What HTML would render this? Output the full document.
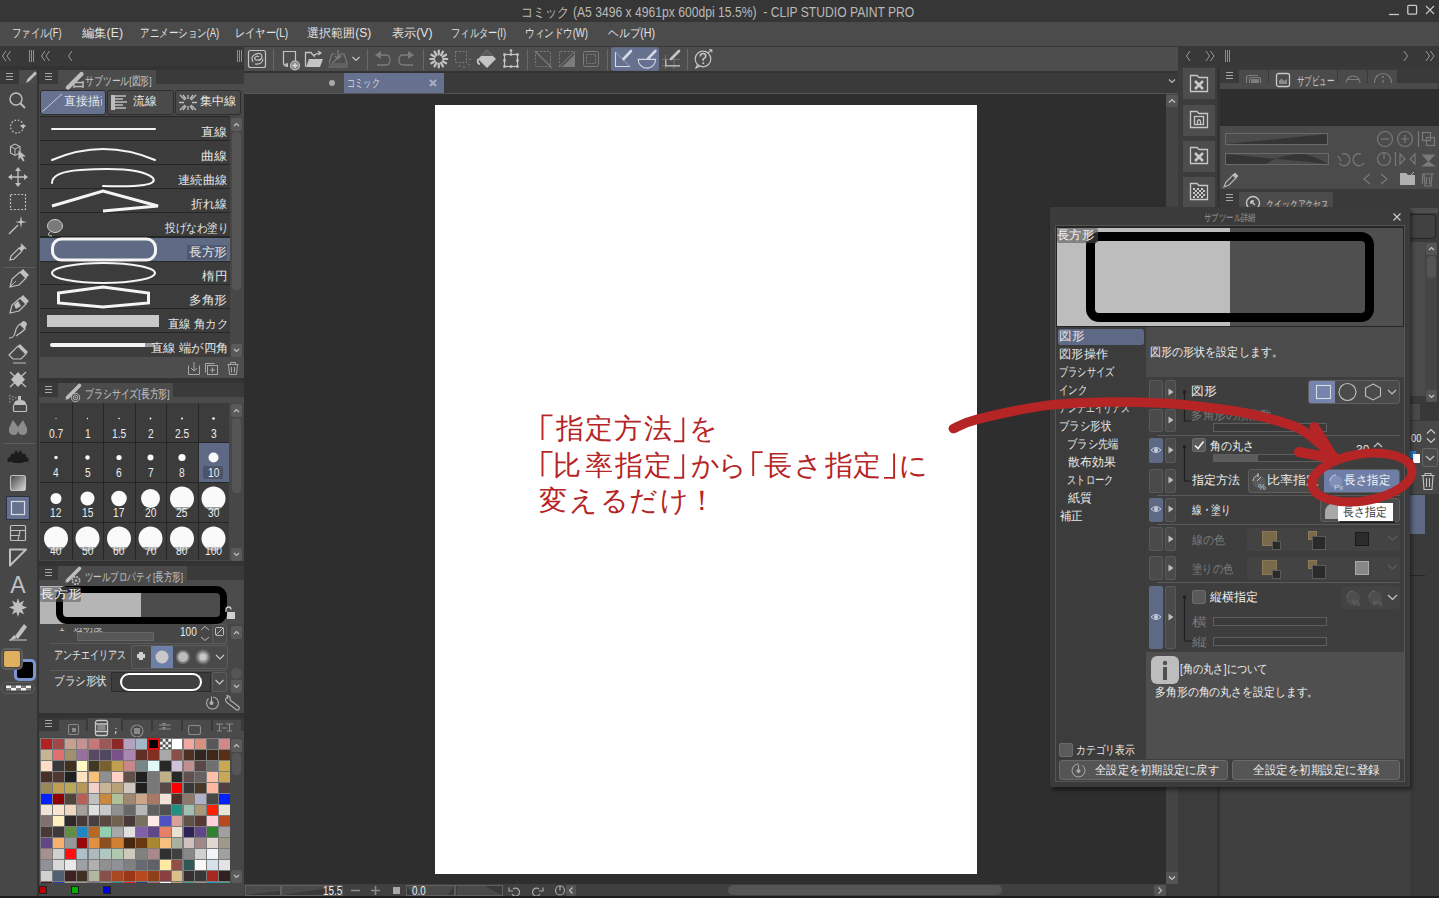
<!DOCTYPE html>
<html><head><meta charset="utf-8">
<style>
*{box-sizing:border-box;margin:0;padding:0}
html,body{width:1439px;height:898px;overflow:hidden;background:#2e2e2e;font-family:"Liberation Sans",sans-serif;color:#e0e0e0}
.a{position:absolute}
.t{position:absolute;white-space:nowrap;line-height:1}
</style></head><body>
<div class="a" style="left:0px;top:0px;width:1439px;height:22px;background:#363636;"></div>
<div class="t" style="left:521.27px;top:5.00px;font-size:14px;color:#b9b9b9;transform:scaleX(0.8670);transform-origin:0 0;--nw:453.64;--sx:0.8670;">コミック (A5 3496 x 4961px 600dpi 15.5%)&nbsp; - CLIP STUDIO PAINT PRO</div>
<svg class="a" style="left:1385px;top:0px;" width="52" height="20" viewBox="0 0 52 20" fill="none"><path d="M4 14.5H14" stroke="#c8c8c8" stroke-width="1.3"/><rect x="22.8" y="5.4" width="8.8" height="8.8" rx="1.2" stroke="#c8c8c8" stroke-width="1.3"/><path d="M41 6L49 14M49 6L41 14" stroke="#c8c8c8" stroke-width="1.1"/></svg>
<div class="a" style="left:0px;top:22px;width:1439px;height:24px;background:#4b4b4b;"></div>
<div class="t" style="left:12.22px;top:27.00px;font-size:12px;color:#e2e2e2;transform:scaleX(0.7823);transform-origin:0 0;--nw:63.33;--sx:0.7823;">ファイル(F)</div>
<div class="t" style="left:82.00px;top:27.00px;font-size:12px;color:#e2e2e2;transform:scaleX(1.0256);transform-origin:0 0;--nw:40.00;--sx:1.0256;">編集(E)</div>
<div class="t" style="left:140.21px;top:27.00px;font-size:12px;color:#e2e2e2;transform:scaleX(0.7918);transform-origin:0 0;--nw:100.00;--sx:0.7918;">アニメーション(A)</div>
<div class="t" style="left:235.30px;top:27.00px;font-size:12px;color:#e2e2e2;transform:scaleX(0.8500);transform-origin:0 0;--nw:62.67;--sx:0.8500;">レイヤー(L)</div>
<div class="t" style="left:307.20px;top:27.00px;font-size:12px;color:#e2e2e2;--nw:64.00;--sx:0.9968;">選択範囲(S)</div>
<div class="t" style="left:391.59px;top:27.00px;font-size:12px;color:#e2e2e2;transform:scaleX(1.0105);transform-origin:0 0;--nw:40.00;--sx:1.0105;">表示(V)</div>
<div class="t" style="left:450.93px;top:27.00px;font-size:12px;color:#e2e2e2;transform:scaleX(0.7714);transform-origin:0 0;--nw:71.33;--sx:0.7714;">フィルター(I)</div>
<div class="t" style="left:525.21px;top:27.00px;font-size:12px;color:#e2e2e2;transform:scaleX(0.7949);transform-origin:0 0;--nw:79.33;--sx:0.7949;">ウィンドウ(W)</div>
<div class="t" style="left:607.70px;top:27.00px;font-size:12px;color:#e2e2e2;transform:scaleX(0.8961);transform-origin:0 0;--nw:52.67;--sx:0.8961;">ヘルプ(H)</div>
<div class="a" style="left:0px;top:46px;width:244px;height:24px;background:#383838;"></div>
<div class="a" style="left:0px;top:66px;width:244px;height:4px;background:#333333;"></div>
<svg class="a" style="left:0px;top:46px;" width="244" height="20" viewBox="0 0 244 20" fill="none"><path d="M6 5L2.5 10L6 15M10.5 5L7 10L10.5 15" stroke="#9a9a9a" stroke-width="1"/><path d="M29.5 4V16M31.5 4V16M33.5 4V16" stroke="#9a9a9a" stroke-width="0.9"/><path d="M45 5L41.5 10L45 15M49.5 5L46 10L49.5 15" stroke="#9a9a9a" stroke-width="1"/><path d="M72 5L68.5 10L72 15" stroke="#9a9a9a" stroke-width="1"/><path d="M237.5 4V16M239.5 4V16M241.5 4V16" stroke="#9a9a9a" stroke-width="0.9"/></svg>
<div class="a" style="left:244px;top:46px;width:934px;height:25px;background:#4d4d4d;"></div>
<div class="a" style="left:244px;top:46px;width:934px;height:1px;background:#383838;"></div>
<div class="a" style="left:244px;top:71px;width:934px;height:2px;background:#333333;"></div>
<div class="a" style="left:1178px;top:46px;width:261px;height:21px;background:#383838;"></div>
<div class="a" style="left:0px;top:70px;width:37px;height:828px;background:#474747;"></div>
<div class="a" style="left:0px;top:70px;width:19px;height:14px;background:#393939;"></div>
<svg class="a" style="left:4px;top:72px;" width="12" height="10" viewBox="0 0 12 10" fill="none"><path d="M2 1.5H9M2 4.5H9M2 7.5H9" stroke="#a8a8a8" stroke-width="1"/></svg>
<div class="a" style="left:37px;top:70px;width:2px;height:828px;background:#333333;"></div>
<div class="a" style="left:39px;top:70px;width:205px;height:828px;background:#474747;"></div>
<div class="a" style="left:39px;top:70px;width:205px;height:14px;background:#3a3a3a;"></div>
<div class="a" style="left:39px;top:70px;width:19px;height:14px;background:#393939;"></div>
<svg class="a" style="left:43px;top:72px;" width="12" height="10" viewBox="0 0 12 10" fill="none"><path d="M2 1.5H9M2 4.5H9M2 7.5H9" stroke="#a8a8a8" stroke-width="1"/></svg>
<div class="a" style="left:58px;top:70px;width:98px;height:14px;background:#4b4b4b;"></div>
<div class="a" style="left:39px;top:84px;width:205px;height:6px;background:#4b4b4b;"></div>
<div class="t" style="left:85.26px;top:76.00px;font-size:11.5px;color:#c8c8c8;transform:scaleX(0.7371);transform-origin:0 0;--nw:90.39;--sx:0.7371;">サブツール[図形]</div>
<svg class="a" style="left:60px;top:68px;" width="30" height="22" viewBox="0 0 30 22" fill="none"><path d="M8 19.5L21.5 6" stroke="#bdbdbd" stroke-width="4.2" stroke-linecap="round"/><path d="M5.5 21L8 17.5L9.5 19Z" fill="#bdbdbd"/><path d="M14.5 14.5H23M14.5 18.5H23" stroke="#bdbdbd" stroke-width="1.6"/><path d="M14 13V20M23 13V20" stroke="#bdbdbd" stroke-width="1.4"/></svg>
<div class="a" style="left:40px;top:90px;width:66px;height:25px;background:#66728f;border:1px solid #2d2d2d;border-radius:3px"></div>
<div class="a" style="left:107px;top:90px;width:67px;height:25px;background:#4a4a4a;border:1px solid #2d2d2d;border-radius:3px"></div>
<div class="a" style="left:175px;top:90px;width:66px;height:25px;background:#4a4a4a;border:1px solid #2d2d2d;border-radius:3px"></div>
<svg class="a" style="left:40px;top:90px;" width="26" height="25" viewBox="0 0 26 25" fill="none"><path d="M2.5 21.5L22 4" stroke="#d0d0d0" stroke-width="1"/></svg>
<svg class="a" style="left:110px;top:94px;" width="20" height="17" viewBox="0 0 20 17" fill="none"><path d="M2 2H16M2 5H13M2 8H17M2 11H13M2 14H16" stroke="#bdbdbd" stroke-width="1.3"/><rect x="1" y="1" width="4" height="15" fill="#bdbdbd"/></svg>
<svg class="a" style="left:178px;top:94px;" width="20" height="17" viewBox="0 0 20 17" fill="none"><g stroke="#bdbdbd" stroke-width="1.3"><path d="M2 1L7 6M18 1L13 6M2 16L7 11M18 16L13 11M10 1V5M10 12V16M1 8.5H6M14 8.5H19M5 1L8 5M15 1L12 5M5 16L8 12M15 16L12 12"/></g></svg>
<div class="t" style="left:64.00px;top:95.00px;font-size:12px;color:#e8e8e8;--nw:48.00;--sx:1.0000;clip-path:inset(0 10px 0 0)">直接描画</div>
<div class="t" style="left:133.00px;top:95.00px;font-size:12px;color:#e8e8e8;transform:scaleX(0.9826);transform-origin:0 0;--nw:24.00;--sx:0.9826;">流線</div>
<div class="t" style="left:200.40px;top:95.00px;font-size:12px;color:#e8e8e8;transform:scaleX(1.0171);transform-origin:0 0;--nw:36.00;--sx:1.0171;">集中線</div>
<div class="a" style="left:40px;top:116px;width:190px;height:241px;background:#3c3c3c;"></div>
<div class="a" style="left:40px;top:116px;width:190px;height:1px;background:#262626;"></div>
<div class="a" style="left:40px;top:140px;width:190px;height:1px;background:#262626;"></div>
<div class="a" style="left:40px;top:164px;width:190px;height:1px;background:#262626;"></div>
<div class="a" style="left:40px;top:188px;width:190px;height:1px;background:#262626;"></div>
<div class="a" style="left:40px;top:212px;width:190px;height:1px;background:#262626;"></div>
<div class="a" style="left:40px;top:236px;width:190px;height:1px;background:#262626;"></div>
<div class="a" style="left:40px;top:260px;width:190px;height:1px;background:#262626;"></div>
<div class="a" style="left:40px;top:284px;width:190px;height:1px;background:#262626;"></div>
<div class="a" style="left:40px;top:308px;width:190px;height:1px;background:#262626;"></div>
<div class="a" style="left:40px;top:332px;width:190px;height:1px;background:#262626;"></div>
<div class="a" style="left:40px;top:237px;width:190px;height:24px;background:#5f6a84;"></div>
<div class="a" style="left:40px;top:237px;width:190px;height:1px;background:#262626;"></div>
<div class="a" style="left:40px;top:261px;width:190px;height:1px;background:#262626;"></div>
<svg class="a" style="left:40px;top:116px;" width="190" height="241" viewBox="0 0 190 241" fill="none"><g stroke="#f4f4f4" fill="none" stroke-linecap="round"><path d="M12 13H115" stroke-width="2"/><path d="M12 44Q63 22 115 44" stroke-width="2"/><path d="M12 67Q12 56 40 54Q100 50 113 62Q120 72 63 70" stroke-width="2"/><path d="M12 90L63 75L118 90L63 95" stroke-width="3" stroke-linecap="butt"/><rect x="12.5" y="123" width="103" height="21" rx="9" stroke-width="3"/><ellipse cx="63.5" cy="157" rx="51.5" ry="10" stroke-width="2"/><path d="M18.5 177L63 171L108.5 177V187L63 191L18.5 187Z" stroke-width="3" stroke-linejoin="miter"/><path d="M12 229H105" stroke-width="4"/></g><rect x="7" y="199" width="112" height="12" fill="#c8c8c8"/><rect x="105" y="227" width="10" height="4" fill="#9a9a9a"/><ellipse cx="15" cy="110" rx="7.5" ry="6.5" fill="#7a7a7a" stroke="#cfcfcf" stroke-width="1"/><path d="M10 116Q6 120 12 120" stroke="#cfcfcf" stroke-width="1"/></svg>
<div class="a" style="left:187px;top:245px;width:40px;height:15px;background:#4e586e;"></div>
<div class="t" style="left:200.91px;top:126.00px;font-size:12px;color:#e6e6e6;transform:scaleX(1.0909);transform-origin:0 0;--nw:24.00;--sx:1.0909;">直線</div>
<div class="t" style="left:200.91px;top:150.00px;font-size:12px;color:#e6e6e6;transform:scaleX(1.0909);transform-origin:0 0;--nw:24.00;--sx:1.0909;">曲線</div>
<div class="t" style="left:177.98px;top:174.00px;font-size:12px;color:#e6e6e6;transform:scaleX(1.0217);transform-origin:0 0;--nw:48.00;--sx:1.0217;">連続曲線</div>
<div class="t" style="left:191.00px;top:198.00px;font-size:12px;color:#e6e6e6;--nw:36.00;--sx:1.0000;">折れ線</div>
<div class="t" style="left:165.00px;top:222.00px;font-size:12px;color:#e6e6e6;transform:scaleX(0.8841);transform-origin:0 0;--nw:72.00;--sx:0.8841;">投げなわ塗り</div>
<div class="t" style="left:188.94px;top:246.00px;font-size:12px;color:#e6e6e6;transform:scaleX(1.0588);transform-origin:0 0;--nw:36.00;--sx:1.0588;">長方形</div>
<div class="t" style="left:202.00px;top:270.00px;font-size:12px;color:#e6e6e6;transform:scaleX(1.0435);transform-origin:0 0;--nw:24.00;--sx:1.0435;">楕円</div>
<div class="t" style="left:188.94px;top:294.00px;font-size:12px;color:#e6e6e6;transform:scaleX(1.0588);transform-origin:0 0;--nw:36.00;--sx:1.0588;">多角形</div>
<div class="t" style="left:168.05px;top:318.00px;font-size:12px;color:#e6e6e6;transform:scaleX(0.9500);transform-origin:0 0;--nw:63.34;--sx:0.9500;">直線 角カク</div>
<div class="t" style="left:150.97px;top:342.00px;font-size:12px;color:#e6e6e6;transform:scaleX(1.0278);transform-origin:0 0;--nw:75.34;--sx:1.0278;">直線 端が四角</div>
<div class="a" style="left:230px;top:116px;width:13px;height:241px;background:#474747;"></div>
<div class="a" style="left:231px;top:118px;width:11px;height:13px;background:#5a5a5a;border-radius:2px"></div>
<svg class="a" style="left:231px;top:118px;" width="11" height="13" viewBox="0 0 11 13" fill="none"><path d="M3 8L5.5 5.5L8 8" stroke="#c0c0c0" stroke-width="1.1"/></svg>
<div class="a" style="left:232px;top:132px;width:9px;height:158px;background:#555555;border-radius:4px"></div>
<div class="a" style="left:231px;top:344px;width:11px;height:13px;background:#5a5a5a;border-radius:2px"></div>
<svg class="a" style="left:231px;top:344px;" width="11" height="13" viewBox="0 0 11 13" fill="none"><path d="M3 5L5.5 7.5L8 5" stroke="#c0c0c0" stroke-width="1.1"/></svg>
<div class="a" style="left:39px;top:357px;width:205px;height:21px;background:#4d4d4d;"></div>
<svg class="a" style="left:186px;top:360px;" width="56" height="16" viewBox="0 0 56 16" fill="none"><g stroke="#a8a8a8" stroke-width="1" fill="none"><path d="M2.5 5.5V14.5H13.5V5.5M8 2V11M5 8L8 11L11 8"/><rect x="21.5" y="5.5" width="10" height="9"/><path d="M19.5 12.5V3.5H28.5"/><path d="M26.5 7.5V12.5M24 10H29"/><path d="M41.5 4.5H52.5M44.5 4.5V2.5H49.5V4.5M42.5 4.5L43.5 14.5H50.5L51.5 4.5M45.5 7V12.5M48.5 7V12.5"/></g></svg>
<div class="a" style="left:39px;top:378px;width:205px;height:5px;background:#333333;"></div>
<div class="a" style="left:39px;top:383px;width:205px;height:14px;background:#3a3a3a;"></div>
<div class="a" style="left:39px;top:383px;width:19px;height:14px;background:#393939;"></div>
<svg class="a" style="left:43px;top:385px;" width="12" height="10" viewBox="0 0 12 10" fill="none"><path d="M2 1.5H9M2 4.5H9M2 7.5H9" stroke="#a8a8a8" stroke-width="1"/></svg>
<div class="a" style="left:58px;top:383px;width:115px;height:14px;background:#4b4b4b;"></div>
<div class="a" style="left:39px;top:397px;width:205px;height:6px;background:#4b4b4b;"></div>
<div class="t" style="left:85.26px;top:389.00px;font-size:11.5px;color:#c8c8c8;transform:scaleX(0.7398);transform-origin:0 0;--nw:114.39;--sx:0.7398;">ブラシサイズ[長方形]</div>
<svg class="a" style="left:60px;top:381px;" width="30" height="22" viewBox="0 0 30 22" fill="none"><path d="M7.5 16.5L19.5 4.5" stroke="#bdbdbd" stroke-width="3.6" stroke-linecap="round"/><path d="M5 19L7.5 15L9 17Z" fill="#bdbdbd"/><circle cx="15.5" cy="16.5" r="4.2" fill="#4b4b4b" stroke="#bdbdbd" stroke-width="0.9"/><circle cx="15.5" cy="16.5" r="2.3" stroke="#bdbdbd" stroke-width="0.9"/><rect x="14.8" y="15.8" width="1.4" height="1.4" fill="#bdbdbd"/></svg>
<div class="a" style="left:40px;top:403px;width:189px;height:157px;background:#262626;"></div>
<div class="a" style="left:40px;top:403px;width:32px;height:39px;background:#3c3c3c;"></div>
<div class="a" style="left:73px;top:403px;width:30px;height:39px;background:#3c3c3c;"></div>
<div class="a" style="left:104px;top:403px;width:31px;height:39px;background:#3c3c3c;"></div>
<div class="a" style="left:136px;top:403px;width:30px;height:39px;background:#3c3c3c;"></div>
<div class="a" style="left:167px;top:403px;width:31px;height:39px;background:#3c3c3c;"></div>
<div class="a" style="left:199px;top:403px;width:30px;height:39px;background:#3c3c3c;"></div>
<div class="a" style="left:40px;top:443px;width:32px;height:39px;background:#3c3c3c;"></div>
<div class="a" style="left:73px;top:443px;width:30px;height:39px;background:#3c3c3c;"></div>
<div class="a" style="left:104px;top:443px;width:31px;height:39px;background:#3c3c3c;"></div>
<div class="a" style="left:136px;top:443px;width:30px;height:39px;background:#3c3c3c;"></div>
<div class="a" style="left:167px;top:443px;width:31px;height:39px;background:#3c3c3c;"></div>
<div class="a" style="left:199px;top:443px;width:30px;height:39px;background:#5e6a85;"></div>
<div class="a" style="left:40px;top:483px;width:32px;height:39px;background:#3c3c3c;"></div>
<div class="a" style="left:73px;top:483px;width:30px;height:39px;background:#3c3c3c;"></div>
<div class="a" style="left:104px;top:483px;width:31px;height:39px;background:#3c3c3c;"></div>
<div class="a" style="left:136px;top:483px;width:30px;height:39px;background:#3c3c3c;"></div>
<div class="a" style="left:167px;top:483px;width:31px;height:39px;background:#3c3c3c;"></div>
<div class="a" style="left:199px;top:483px;width:30px;height:39px;background:#3c3c3c;"></div>
<div class="a" style="left:40px;top:523px;width:32px;height:37px;background:#3c3c3c;"></div>
<div class="a" style="left:73px;top:523px;width:30px;height:37px;background:#3c3c3c;"></div>
<div class="a" style="left:104px;top:523px;width:31px;height:37px;background:#3c3c3c;"></div>
<div class="a" style="left:136px;top:523px;width:30px;height:37px;background:#3c3c3c;"></div>
<div class="a" style="left:167px;top:523px;width:31px;height:37px;background:#3c3c3c;"></div>
<div class="a" style="left:199px;top:523px;width:30px;height:37px;background:#3c3c3c;"></div>
<svg class="a" style="left:0;top:0" width="244" height="600" viewBox="0 0 244 600"><circle cx="56.0" cy="418.5" r="0.6" fill="#fafafa"/><circle cx="87.5" cy="418.5" r="0.7" fill="#fafafa"/><circle cx="119.0" cy="418.5" r="0.8" fill="#fafafa"/><circle cx="150.5" cy="418.5" r="0.9" fill="#fafafa"/><circle cx="182.0" cy="418.5" r="1.0" fill="#fafafa"/><circle cx="213.5" cy="418.5" r="1.3" fill="#fafafa"/><circle cx="56.0" cy="457.5" r="1.7" fill="#fafafa"/><circle cx="87.5" cy="457.5" r="2.2" fill="#fafafa"/><circle cx="119.0" cy="457.5" r="2.6" fill="#fafafa"/><circle cx="150.5" cy="457.5" r="3" fill="#fafafa"/><circle cx="182.0" cy="457.5" r="3.6" fill="#fafafa"/><circle cx="213.5" cy="457.5" r="5" fill="#fafafa"/><circle cx="56.0" cy="498.5" r="5.5" fill="#fafafa"/><circle cx="87.5" cy="498.5" r="7" fill="#fafafa"/><circle cx="119.0" cy="498.5" r="7.8" fill="#fafafa"/><circle cx="150.5" cy="498.5" r="9.5" fill="#fafafa"/><clipPath id="cp182498"><rect x="0" y="507.0" width="244" height="30"/></clipPath><circle cx="182.0" cy="498.5" r="12" fill="#fafafa"/><circle cx="182.0" cy="498.5" r="12" fill="#9c9c9c" clip-path="url(#cp182498)"/><clipPath id="cp213498"><rect x="0" y="507.0" width="244" height="30"/></clipPath><circle cx="213.5" cy="498.5" r="12" fill="#fafafa"/><circle cx="213.5" cy="498.5" r="12" fill="#9c9c9c" clip-path="url(#cp213498)"/><clipPath id="cp56538"><rect x="0" y="547.0" width="244" height="30"/></clipPath><circle cx="56.0" cy="538.5" r="12" fill="#fafafa"/><circle cx="56.0" cy="538.5" r="12" fill="#9c9c9c" clip-path="url(#cp56538)"/><clipPath id="cp87538"><rect x="0" y="547.0" width="244" height="30"/></clipPath><circle cx="87.5" cy="538.5" r="12" fill="#fafafa"/><circle cx="87.5" cy="538.5" r="12" fill="#9c9c9c" clip-path="url(#cp87538)"/><clipPath id="cp119538"><rect x="0" y="547.0" width="244" height="30"/></clipPath><circle cx="119.0" cy="538.5" r="12" fill="#fafafa"/><circle cx="119.0" cy="538.5" r="12" fill="#9c9c9c" clip-path="url(#cp119538)"/><clipPath id="cp150538"><rect x="0" y="547.0" width="244" height="30"/></clipPath><circle cx="150.5" cy="538.5" r="12" fill="#fafafa"/><circle cx="150.5" cy="538.5" r="12" fill="#9c9c9c" clip-path="url(#cp150538)"/><clipPath id="cp182538"><rect x="0" y="547.0" width="244" height="30"/></clipPath><circle cx="182.0" cy="538.5" r="12" fill="#fafafa"/><circle cx="182.0" cy="538.5" r="12" fill="#9c9c9c" clip-path="url(#cp182538)"/><clipPath id="cp213538"><rect x="0" y="547.0" width="244" height="30"/></clipPath><circle cx="213.5" cy="538.5" r="12" fill="#fafafa"/><circle cx="213.5" cy="538.5" r="12" fill="#9c9c9c" clip-path="url(#cp213538)"/></svg>
<div class="a" style="left:203px;top:466px;width:20px;height:13px;background:#4b5468;border-radius:2px"></div>
<div class="t" style="left:49.20px;top:428.00px;font-size:12px;color:#ececec;transform:scaleX(0.8500);transform-origin:0 0;--nw:16.69;--sx:0.8500;">0.7</div>
<div class="t" style="left:84.53px;top:428.00px;font-size:12px;color:#ececec;transform:scaleX(0.8500);transform-origin:0 0;--nw:6.69;--sx:0.8500;">1</div>
<div class="t" style="left:111.78px;top:428.00px;font-size:12px;color:#ececec;transform:scaleX(0.8500);transform-origin:0 0;--nw:16.69;--sx:0.8500;">1.5</div>
<div class="t" style="left:147.53px;top:428.00px;font-size:12px;color:#ececec;transform:scaleX(0.8500);transform-origin:0 0;--nw:6.69;--sx:0.8500;">2</div>
<div class="t" style="left:174.78px;top:428.00px;font-size:12px;color:#ececec;transform:scaleX(0.8500);transform-origin:0 0;--nw:16.69;--sx:0.8500;">2.5</div>
<div class="t" style="left:210.53px;top:428.00px;font-size:12px;color:#ececec;transform:scaleX(0.8500);transform-origin:0 0;--nw:6.69;--sx:0.8500;">3</div>
<div class="t" style="left:53.02px;top:467.00px;font-size:12px;color:#ececec;transform:scaleX(0.8500);transform-origin:0 0;--nw:6.69;--sx:0.8500;">4</div>
<div class="t" style="left:84.53px;top:467.00px;font-size:12px;color:#ececec;transform:scaleX(0.8500);transform-origin:0 0;--nw:6.69;--sx:0.8500;">5</div>
<div class="t" style="left:116.03px;top:467.00px;font-size:12px;color:#ececec;transform:scaleX(0.8500);transform-origin:0 0;--nw:6.69;--sx:0.8500;">6</div>
<div class="t" style="left:147.53px;top:467.00px;font-size:12px;color:#ececec;transform:scaleX(0.8500);transform-origin:0 0;--nw:6.69;--sx:0.8500;">7</div>
<div class="t" style="left:179.45px;top:467.00px;font-size:12px;color:#ececec;transform:scaleX(0.8500);transform-origin:0 0;--nw:6.69;--sx:0.8500;">8</div>
<div class="t" style="left:207.55px;top:467.00px;font-size:12px;color:#ececec;transform:scaleX(0.8500);transform-origin:0 0;--nw:13.36;--sx:0.8500;">10</div>
<div class="t" style="left:50.05px;top:507.00px;font-size:12px;color:#ececec;transform:scaleX(0.8500);transform-origin:0 0;--nw:13.36;--sx:0.8500;">12</div>
<div class="t" style="left:81.55px;top:507.00px;font-size:12px;color:#ececec;transform:scaleX(0.8500);transform-origin:0 0;--nw:13.36;--sx:0.8500;">15</div>
<div class="t" style="left:113.05px;top:507.00px;font-size:12px;color:#ececec;transform:scaleX(0.8500);transform-origin:0 0;--nw:13.36;--sx:0.8500;">17</div>
<div class="t" style="left:144.55px;top:507.00px;font-size:12px;color:#ececec;transform:scaleX(0.8500);transform-origin:0 0;--nw:13.36;--sx:0.8500;">20</div>
<div class="t" style="left:176.05px;top:507.00px;font-size:12px;color:#ececec;transform:scaleX(0.8500);transform-origin:0 0;--nw:13.36;--sx:0.8500;">25</div>
<div class="t" style="left:207.55px;top:507.00px;font-size:12px;color:#ececec;transform:scaleX(0.8500);transform-origin:0 0;--nw:13.36;--sx:0.8500;">30</div>
<div class="t" style="left:50.48px;top:545.00px;font-size:12px;color:#ececec;transform:scaleX(0.8500);transform-origin:0 0;--nw:13.36;--sx:0.8500;">40</div>
<div class="t" style="left:81.55px;top:545.00px;font-size:12px;color:#ececec;transform:scaleX(0.8500);transform-origin:0 0;--nw:13.36;--sx:0.8500;">50</div>
<div class="t" style="left:113.05px;top:545.00px;font-size:12px;color:#ececec;transform:scaleX(0.8500);transform-origin:0 0;--nw:13.36;--sx:0.8500;">60</div>
<div class="t" style="left:144.55px;top:545.00px;font-size:12px;color:#ececec;transform:scaleX(0.8500);transform-origin:0 0;--nw:13.36;--sx:0.8500;">70</div>
<div class="t" style="left:176.47px;top:545.00px;font-size:12px;color:#ececec;transform:scaleX(0.8500);transform-origin:0 0;--nw:13.36;--sx:0.8500;">80</div>
<div class="t" style="left:204.57px;top:545.00px;font-size:12px;color:#ececec;transform:scaleX(0.8500);transform-origin:0 0;--nw:20.03;--sx:0.8500;">100</div>
<div class="a" style="left:230px;top:403px;width:13px;height:157px;background:#474747;"></div>
<div class="a" style="left:231px;top:404px;width:11px;height:13px;background:#5a5a5a;border-radius:2px"></div>
<svg class="a" style="left:231px;top:404px;" width="11" height="13" viewBox="0 0 11 13" fill="none"><path d="M3 8L5.5 5.5L8 8" stroke="#c0c0c0" stroke-width="1.1"/></svg>
<div class="a" style="left:232px;top:418px;width:9px;height:75px;background:#555555;border-radius:4px"></div>
<div class="a" style="left:231px;top:548px;width:11px;height:13px;background:#5a5a5a;border-radius:2px"></div>
<svg class="a" style="left:231px;top:548px;" width="11" height="13" viewBox="0 0 11 13" fill="none"><path d="M3 5L5.5 7.5L8 5" stroke="#c0c0c0" stroke-width="1.1"/></svg>
<div class="a" style="left:39px;top:561px;width:205px;height:5px;background:#333333;"></div>
<div class="a" style="left:39px;top:566px;width:205px;height:14px;background:#3a3a3a;"></div>
<div class="a" style="left:39px;top:566px;width:19px;height:14px;background:#393939;"></div>
<svg class="a" style="left:43px;top:568px;" width="12" height="10" viewBox="0 0 12 10" fill="none"><path d="M2 1.5H9M2 4.5H9M2 7.5H9" stroke="#a8a8a8" stroke-width="1"/></svg>
<div class="a" style="left:58px;top:566px;width:129px;height:14px;background:#4b4b4b;"></div>
<div class="a" style="left:39px;top:580px;width:205px;height:6px;background:#4b4b4b;"></div>
<div class="t" style="left:85.29px;top:572.00px;font-size:11.5px;color:#c8c8c8;transform:scaleX(0.7080);transform-origin:0 0;--nw:138.39;--sx:0.7080;">ツールプロパティ[長方形]</div>
<svg class="a" style="left:60px;top:564px;" width="30" height="22" viewBox="0 0 30 22" fill="none"><path d="M7.5 16.5L19.5 4.5" stroke="#bdbdbd" stroke-width="3.6" stroke-linecap="round"/><path d="M5 19L7.5 15L9 17Z" fill="#bdbdbd"/><circle cx="16" cy="16.5" r="3.6" fill="#4b4b4b" stroke="#bdbdbd" stroke-width="1.8" stroke-dasharray="1.8 1"/><circle cx="16" cy="16.5" r="1.2" fill="#bdbdbd"/></svg>
<div class="a" style="left:40px;top:586px;width:101px;height:38px;background:#b5b5b5;"></div>
<div class="a" style="left:141px;top:586px;width:102px;height:38px;background:#4b4b4b;"></div>
<div class="a" style="left:56px;top:586px;width:171px;height:38px;border:7px solid #000;border-radius:11px"></div>
<div class="a" style="left:40px;top:587px;width:41px;height:15px;background:rgba(90,90,90,0.55);border-radius:2px"></div>
<div class="t" style="left:39.85px;top:588.00px;font-size:12px;color:#f0f0f0;transform:scaleX(1.1471);transform-origin:0 0;--nw:36.00;--sx:1.1471;">長方形</div>
<svg class="a" style="left:222px;top:605px;" width="14" height="15" viewBox="0 0 14 15" fill="none"><path d="M4 7V4.5Q4 2 6.5 2Q9 2 9 4.5" stroke="#cfcfcf" stroke-width="1.3" fill="none"/><rect x="5" y="7" width="8" height="7" fill="#cfcfcf"/></svg>
<div class="t" style="left:180.16px;top:626.00px;font-size:12px;color:#ececec;transform:scaleX(0.8421);transform-origin:0 0;--nw:20.03;--sx:0.8421;">100</div>
<svg class="a" style="left:198px;top:624px;" width="14" height="20" viewBox="0 0 14 20" fill="none"><path d="M3 6L7 2.5L11 6M3 13L7 16.5L11 13" stroke="#bbb" stroke-width="1"/></svg>
<div class="a" style="left:212px;top:624px;width:15px;height:20px;background:#4a4a4a;border:1px solid #5c5c5c;border-radius:2px"></div>
<svg class="a" style="left:212px;top:624px;" width="15" height="20" viewBox="0 0 15 20" fill="none"><rect x="3.5" y="3.5" width="8" height="8" rx="1" stroke="#bbb" stroke-width="1"/><path d="M4 11L11 4" stroke="#bbb"/></svg>
<div class="a" style="left:77px;top:632px;width:77px;height:9px;background:#575757;border:1px solid #666"></div>
<div class="t" style="left:59.09px;top:622.00px;font-size:11px;color:#c8c8c8;transform:scaleX(0.9149);transform-origin:0 0;--nw:48.61;--sx:0.9149;clip-path:inset(6px 0 0 0)">1 ~透明度</div>
<div class="a" style="left:50px;top:643px;width:176px;height:1px;background:#5a5a5a;"></div>
<div class="t" style="left:54.25px;top:649.00px;font-size:12px;color:#e6e6e6;transform:scaleX(0.7527);transform-origin:0 0;--nw:96.00;--sx:0.7527;">アンチエイリアス</div>
<div class="a" style="left:131px;top:645px;width:97px;height:24px;background:#4a4a4a;border:1px solid #5c5c5c;border-radius:2px"></div>
<div class="a" style="left:151px;top:646px;width:22px;height:22px;background:#6e7fa8;"></div>
<svg class="a" style="left:131px;top:645px;" width="97" height="24" viewBox="0 0 97 24" fill="none"><path d="M6 9H8V7H12V9H14V13H12V15H8V13H6Z" fill="#cfcfcf"/><circle cx="31" cy="12" r="6.5" fill="#c8c8c8"/><circle cx="52" cy="12" r="7" fill="#777"/><circle cx="52" cy="12" r="5" fill="#bbb"/><circle cx="72" cy="12" r="7.5" fill="#6a6a6a"/><circle cx="72" cy="12" r="5.5" fill="#999"/><circle cx="72" cy="12" r="3.5" fill="#c8c8c8"/><path d="M85 10L89 14L93 10" stroke="#ccc" stroke-width="1.1"/></svg>
<div class="a" style="left:50px;top:670px;width:176px;height:1px;background:#5a5a5a;"></div>
<div class="t" style="left:54.12px;top:675.00px;font-size:12px;color:#e6e6e6;transform:scaleX(0.8793);transform-origin:0 0;--nw:60.00;--sx:0.8793;">ブラシ形状</div>
<div class="a" style="left:111px;top:672px;width:100px;height:20px;background:#3c3c3c;border:1px solid #2d2d2d"></div>
<div class="a" style="left:120px;top:673px;width:82px;height:18px;border:2.5px solid #fff;border-radius:9px;background:#404040"></div>
<div class="a" style="left:212px;top:672px;width:15px;height:20px;background:#4a4a4a;border:1px solid #5c5c5c;border-radius:2px"></div>
<svg class="a" style="left:212px;top:672px;" width="15" height="20" viewBox="0 0 15 20" fill="none"><path d="M3.5 8L7.5 12L11.5 8" stroke="#ccc" stroke-width="1.1"/></svg>
<div class="a" style="left:230px;top:624px;width:13px;height:69px;background:#474747;"></div>
<div class="a" style="left:231px;top:626px;width:11px;height:13px;background:#5a5a5a;border-radius:2px"></div>
<svg class="a" style="left:231px;top:626px;" width="11" height="13" viewBox="0 0 11 13" fill="none"><path d="M3 8L5.5 5.5L8 8" stroke="#c0c0c0" stroke-width="1.1"/></svg>
<div class="a" style="left:231px;top:668px;width:11px;height:11px;border-radius:50%;background:#555"></div>
<div class="a" style="left:231px;top:680px;width:11px;height:13px;background:#5a5a5a;border-radius:2px"></div>
<svg class="a" style="left:231px;top:680px;" width="11" height="13" viewBox="0 0 11 13" fill="none"><path d="M3 5L5.5 7.5L8 5" stroke="#c0c0c0" stroke-width="1.1"/></svg>
<svg class="a" style="left:203px;top:694px;" width="40" height="17" viewBox="0 0 40 17" fill="none"><g stroke="#b0b0b0" stroke-width="1.1" fill="none"><path d="M5.5 4.5A6 6 0 1 0 10 3"/><path d="M8.5 2.5V8.5"/><circle cx="8.5" cy="9" r="1.5" fill="#b0b0b0"/><path d="M24 3.5Q21 6 24 8.5L33 15.5Q35 17 36 15Q37 13 35 12L27 6Q28 2 24 1.5L25 4.5Z"/></g></svg>
<div class="a" style="left:39px;top:713px;width:205px;height:5px;background:#333333;"></div>
<div class="a" style="left:39px;top:718px;width:205px;height:13px;background:#3a3a3a;"></div>
<div class="a" style="left:39px;top:718px;width:19px;height:13px;background:#393939;"></div>
<svg class="a" style="left:43px;top:719px;" width="12" height="10" viewBox="0 0 12 10" fill="none"><path d="M2 1.5H9M2 4.5H9M2 7.5H9" stroke="#a8a8a8" stroke-width="1"/></svg>
<div class="a" style="left:59px;top:720px;width:27px;height:11px;background:#4a4a4a;"></div>
<div class="a" style="left:123px;top:720px;width:28px;height:11px;background:#4a4a4a;"></div>
<div class="a" style="left:153px;top:720px;width:28px;height:11px;background:#4a4a4a;"></div>
<div class="a" style="left:183px;top:720px;width:28px;height:11px;background:#4a4a4a;"></div>
<div class="a" style="left:213px;top:720px;width:28px;height:11px;background:#4a4a4a;"></div>
<div class="a" style="left:88px;top:718px;width:33px;height:19px;background:#4b4b4b;"></div>
<div class="a" style="left:39px;top:731px;width:205px;height:6px;background:#4b4b4b;"></div>
<svg class="a" style="left:58px;top:718px;" width="185" height="19" viewBox="0 0 185 19" fill="none"><g stroke="#8a8a8a" stroke-width="1.1" fill="none"><rect x="10.5" y="6.5" width="10" height="10" rx="1.5"/><path d="M78 13A6 6 0 0 1 78 13Z"/><circle cx="79" cy="13" r="6"/><path d="M101 7H113M101 11H113"/><rect x="130.5" y="7.5" width="12" height="9" rx="2"/><path d="M158 6H165M168 6H175M161.5 6V13M171.5 6V13M164 10H169M159 13H164M169 13H174"/></g><rect x="14" y="10" width="4" height="4" fill="#8a8a8a"/><rect x="76" y="10" width="6" height="6" fill="#8a8a8a"/><path d="M104 5L106 8L108 5ZM104 9L106 12L108 9Z" fill="#8a8a8a"/><g stroke="#c8c8c8" stroke-width="1.3" fill="none"><rect x="37.5" y="2.5" width="12" height="15" rx="2"/><path d="M37.5 6H49.5M37.5 13.5H49.5"/></g><rect x="39.5" y="7" width="8" height="5.5" fill="#8a8a8a"/><path d="M58 10V11M58 13Q58 15 57 16" stroke="#c8c8c8" stroke-width="1.2"/></svg>
<div class="a" style="left:40px;top:738px;width:191px;height:145px;background:#7c7c7c;"></div>
<div class="a" style="left:41.0px;top:738.5px;width:10.9px;height:10.0px;background:#b22222"></div>
<div class="a" style="left:52.9px;top:738.5px;width:10.9px;height:10.0px;background:#a04848"></div>
<div class="a" style="left:64.8px;top:738.5px;width:10.9px;height:10.0px;background:#c8a090"></div>
<div class="a" style="left:76.6px;top:738.5px;width:10.9px;height:10.0px;background:#c89090"></div>
<div class="a" style="left:88.5px;top:738.5px;width:10.9px;height:10.0px;background:#c87878"></div>
<div class="a" style="left:100.4px;top:738.5px;width:10.9px;height:10.0px;background:#9a5858"></div>
<div class="a" style="left:112.2px;top:738.5px;width:10.9px;height:10.0px;background:#8c2828"></div>
<div class="a" style="left:124.1px;top:738.5px;width:10.9px;height:10.0px;background:#b4a0c0"></div>
<div class="a" style="left:136.0px;top:738.5px;width:10.9px;height:10.0px;background:#a0b8c8"></div>
<div class="a" style="left:147.9px;top:738.5px;width:10.9px;height:10.0px;background:#000000"></div>
<div class="a" style="left:159.8px;top:738.5px;width:10.9px;height:10.0px;background:repeating-conic-gradient(#f4f4f4 0 25%,#505050 0 50%) 0 0/5.5px 5.5px"></div>
<div class="a" style="left:171.6px;top:738.5px;width:10.9px;height:10.0px;background:#ffffff"></div>
<div class="a" style="left:183.5px;top:738.5px;width:10.9px;height:10.0px;background:#f0a8a0"></div>
<div class="a" style="left:195.4px;top:738.5px;width:10.9px;height:10.0px;background:#d89080"></div>
<div class="a" style="left:207.2px;top:738.5px;width:10.9px;height:10.0px;background:#585858"></div>
<div class="a" style="left:219.1px;top:738.5px;width:10.9px;height:10.0px;background:#d08888"></div>
<div class="a" style="left:41.0px;top:749.5px;width:10.9px;height:10.0px;background:#c8b490"></div>
<div class="a" style="left:52.9px;top:749.5px;width:10.9px;height:10.0px;background:#e07070"></div>
<div class="a" style="left:64.8px;top:749.5px;width:10.9px;height:10.0px;background:#a09070"></div>
<div class="a" style="left:76.6px;top:749.5px;width:10.9px;height:10.0px;background:#9870a0"></div>
<div class="a" style="left:88.5px;top:749.5px;width:10.9px;height:10.0px;background:#584860"></div>
<div class="a" style="left:100.4px;top:749.5px;width:10.9px;height:10.0px;background:#504860"></div>
<div class="a" style="left:112.2px;top:749.5px;width:10.9px;height:10.0px;background:#7a5088"></div>
<div class="a" style="left:124.1px;top:749.5px;width:10.9px;height:10.0px;background:#a888b0"></div>
<div class="a" style="left:136.0px;top:749.5px;width:10.9px;height:10.0px;background:#603028"></div>
<div class="a" style="left:147.9px;top:749.5px;width:10.9px;height:10.0px;background:#803020"></div>
<div class="a" style="left:159.8px;top:749.5px;width:10.9px;height:10.0px;background:#a8a8a8"></div>
<div class="a" style="left:171.6px;top:749.5px;width:10.9px;height:10.0px;background:#885048"></div>
<div class="a" style="left:183.5px;top:749.5px;width:10.9px;height:10.0px;background:#503020"></div>
<div class="a" style="left:195.4px;top:749.5px;width:10.9px;height:10.0px;background:#302820"></div>
<div class="a" style="left:207.2px;top:749.5px;width:10.9px;height:10.0px;background:#402818"></div>
<div class="a" style="left:219.1px;top:749.5px;width:10.9px;height:10.0px;background:#583018"></div>
<div class="a" style="left:41.0px;top:760.5px;width:10.9px;height:10.0px;background:#ffdcc8"></div>
<div class="a" style="left:52.9px;top:760.5px;width:10.9px;height:10.0px;background:#383838"></div>
<div class="a" style="left:64.8px;top:760.5px;width:10.9px;height:10.0px;background:#403020"></div>
<div class="a" style="left:76.6px;top:760.5px;width:10.9px;height:10.0px;background:#fff8c0"></div>
<div class="a" style="left:88.5px;top:760.5px;width:10.9px;height:10.0px;background:#403820"></div>
<div class="a" style="left:100.4px;top:760.5px;width:10.9px;height:10.0px;background:#786030"></div>
<div class="a" style="left:112.2px;top:760.5px;width:10.9px;height:10.0px;background:#c0a050"></div>
<div class="a" style="left:124.1px;top:760.5px;width:10.9px;height:10.0px;background:#c88888"></div>
<div class="a" style="left:136.0px;top:760.5px;width:10.9px;height:10.0px;background:#788888"></div>
<div class="a" style="left:147.9px;top:760.5px;width:10.9px;height:10.0px;background:#e0f8f8"></div>
<div class="a" style="left:159.8px;top:760.5px;width:10.9px;height:10.0px;background:#282828"></div>
<div class="a" style="left:171.6px;top:760.5px;width:10.9px;height:10.0px;background:#d0c0d8"></div>
<div class="a" style="left:183.5px;top:760.5px;width:10.9px;height:10.0px;background:#c09090"></div>
<div class="a" style="left:195.4px;top:760.5px;width:10.9px;height:10.0px;background:#584848"></div>
<div class="a" style="left:207.2px;top:760.5px;width:10.9px;height:10.0px;background:#707070"></div>
<div class="a" style="left:219.1px;top:760.5px;width:10.9px;height:10.0px;background:#c8a850"></div>
<div class="a" style="left:41.0px;top:771.5px;width:10.9px;height:10.0px;background:#483028"></div>
<div class="a" style="left:52.9px;top:771.5px;width:10.9px;height:10.0px;background:#503830"></div>
<div class="a" style="left:64.8px;top:771.5px;width:10.9px;height:10.0px;background:#202020"></div>
<div class="a" style="left:76.6px;top:771.5px;width:10.9px;height:10.0px;background:#ffe0c0"></div>
<div class="a" style="left:88.5px;top:771.5px;width:10.9px;height:10.0px;background:#f8c078"></div>
<div class="a" style="left:100.4px;top:771.5px;width:10.9px;height:10.0px;background:#909090"></div>
<div class="a" style="left:112.2px;top:771.5px;width:10.9px;height:10.0px;background:#ffd0c8"></div>
<div class="a" style="left:124.1px;top:771.5px;width:10.9px;height:10.0px;background:#605048"></div>
<div class="a" style="left:136.0px;top:771.5px;width:10.9px;height:10.0px;background:#202020"></div>
<div class="a" style="left:147.9px;top:771.5px;width:10.9px;height:10.0px;background:#787878"></div>
<div class="a" style="left:159.8px;top:771.5px;width:10.9px;height:10.0px;background:#c0b088"></div>
<div class="a" style="left:171.6px;top:771.5px;width:10.9px;height:10.0px;background:#282828"></div>
<div class="a" style="left:183.5px;top:771.5px;width:10.9px;height:10.0px;background:#605050"></div>
<div class="a" style="left:195.4px;top:771.5px;width:10.9px;height:10.0px;background:#686060"></div>
<div class="a" style="left:207.2px;top:771.5px;width:10.9px;height:10.0px;background:#ffc0a8"></div>
<div class="a" style="left:219.1px;top:771.5px;width:10.9px;height:10.0px;background:#c8a858"></div>
<div class="a" style="left:41.0px;top:782.5px;width:10.9px;height:10.0px;background:#988858"></div>
<div class="a" style="left:52.9px;top:782.5px;width:10.9px;height:10.0px;background:#c0a050"></div>
<div class="a" style="left:64.8px;top:782.5px;width:10.9px;height:10.0px;background:#b8a858"></div>
<div class="a" style="left:76.6px;top:782.5px;width:10.9px;height:10.0px;background:#b89858"></div>
<div class="a" style="left:88.5px;top:782.5px;width:10.9px;height:10.0px;background:#f0d0c8"></div>
<div class="a" style="left:100.4px;top:782.5px;width:10.9px;height:10.0px;background:#c8b498"></div>
<div class="a" style="left:112.2px;top:782.5px;width:10.9px;height:10.0px;background:#b8a078"></div>
<div class="a" style="left:124.1px;top:782.5px;width:10.9px;height:10.0px;background:#d0c8c0"></div>
<div class="a" style="left:136.0px;top:782.5px;width:10.9px;height:10.0px;background:#202020"></div>
<div class="a" style="left:147.9px;top:782.5px;width:10.9px;height:10.0px;background:#787878"></div>
<div class="a" style="left:159.8px;top:782.5px;width:10.9px;height:10.0px;background:#584848"></div>
<div class="a" style="left:171.6px;top:782.5px;width:10.9px;height:10.0px;background:#ff0000"></div>
<div class="a" style="left:183.5px;top:782.5px;width:10.9px;height:10.0px;background:#383838"></div>
<div class="a" style="left:195.4px;top:782.5px;width:10.9px;height:10.0px;background:#483828"></div>
<div class="a" style="left:207.2px;top:782.5px;width:10.9px;height:10.0px;background:#ffb8a0"></div>
<div class="a" style="left:219.1px;top:782.5px;width:10.9px;height:10.0px;background:#504040"></div>
<div class="a" style="left:41.0px;top:793.5px;width:10.9px;height:10.0px;background:#0020ff"></div>
<div class="a" style="left:52.9px;top:793.5px;width:10.9px;height:10.0px;background:#900000"></div>
<div class="a" style="left:64.8px;top:793.5px;width:10.9px;height:10.0px;background:#504438"></div>
<div class="a" style="left:76.6px;top:793.5px;width:10.9px;height:10.0px;background:#b86058"></div>
<div class="a" style="left:88.5px;top:793.5px;width:10.9px;height:10.0px;background:#c0c0c0"></div>
<div class="a" style="left:100.4px;top:793.5px;width:10.9px;height:10.0px;background:#c88840"></div>
<div class="a" style="left:112.2px;top:793.5px;width:10.9px;height:10.0px;background:#b0c098"></div>
<div class="a" style="left:124.1px;top:793.5px;width:10.9px;height:10.0px;background:#a08870"></div>
<div class="a" style="left:136.0px;top:793.5px;width:10.9px;height:10.0px;background:#c8a888"></div>
<div class="a" style="left:147.9px;top:793.5px;width:10.9px;height:10.0px;background:#a87868"></div>
<div class="a" style="left:159.8px;top:793.5px;width:10.9px;height:10.0px;background:#f0e4d8"></div>
<div class="a" style="left:171.6px;top:793.5px;width:10.9px;height:10.0px;background:#503028"></div>
<div class="a" style="left:183.5px;top:793.5px;width:10.9px;height:10.0px;background:#907868"></div>
<div class="a" style="left:195.4px;top:793.5px;width:10.9px;height:10.0px;background:#b0b0c8"></div>
<div class="a" style="left:207.2px;top:793.5px;width:10.9px;height:10.0px;background:#484848"></div>
<div class="a" style="left:219.1px;top:793.5px;width:10.9px;height:10.0px;background:#0020ff"></div>
<div class="a" style="left:41.0px;top:804.5px;width:10.9px;height:10.0px;background:#f0e4d8"></div>
<div class="a" style="left:52.9px;top:804.5px;width:10.9px;height:10.0px;background:#f8e4d0"></div>
<div class="a" style="left:64.8px;top:804.5px;width:10.9px;height:10.0px;background:#f0d8c0"></div>
<div class="a" style="left:76.6px;top:804.5px;width:10.9px;height:10.0px;background:#a8a098"></div>
<div class="a" style="left:88.5px;top:804.5px;width:10.9px;height:10.0px;background:#e0e0e0"></div>
<div class="a" style="left:100.4px;top:804.5px;width:10.9px;height:10.0px;background:#c8c8c8"></div>
<div class="a" style="left:112.2px;top:804.5px;width:10.9px;height:10.0px;background:#909090"></div>
<div class="a" style="left:124.1px;top:804.5px;width:10.9px;height:10.0px;background:#686868"></div>
<div class="a" style="left:136.0px;top:804.5px;width:10.9px;height:10.0px;background:#b8b8b8"></div>
<div class="a" style="left:147.9px;top:804.5px;width:10.9px;height:10.0px;background:#606060"></div>
<div class="a" style="left:159.8px;top:804.5px;width:10.9px;height:10.0px;background:#505050"></div>
<div class="a" style="left:171.6px;top:804.5px;width:10.9px;height:10.0px;background:#209080"></div>
<div class="a" style="left:183.5px;top:804.5px;width:10.9px;height:10.0px;background:#a0c0b0"></div>
<div class="a" style="left:195.4px;top:804.5px;width:10.9px;height:10.0px;background:#a89878"></div>
<div class="a" style="left:207.2px;top:804.5px;width:10.9px;height:10.0px;background:#ff2000"></div>
<div class="a" style="left:219.1px;top:804.5px;width:10.9px;height:10.0px;background:#e8e4d8"></div>
<div class="a" style="left:41.0px;top:815.5px;width:10.9px;height:10.0px;background:#807070"></div>
<div class="a" style="left:52.9px;top:815.5px;width:10.9px;height:10.0px;background:#fff0c0"></div>
<div class="a" style="left:64.8px;top:815.5px;width:10.9px;height:10.0px;background:#302828"></div>
<div class="a" style="left:76.6px;top:815.5px;width:10.9px;height:10.0px;background:#483838"></div>
<div class="a" style="left:88.5px;top:815.5px;width:10.9px;height:10.0px;background:#484040"></div>
<div class="a" style="left:100.4px;top:815.5px;width:10.9px;height:10.0px;background:#584840"></div>
<div class="a" style="left:112.2px;top:815.5px;width:10.9px;height:10.0px;background:#706050"></div>
<div class="a" style="left:124.1px;top:815.5px;width:10.9px;height:10.0px;background:#483838"></div>
<div class="a" style="left:136.0px;top:815.5px;width:10.9px;height:10.0px;background:#787060"></div>
<div class="a" style="left:147.9px;top:815.5px;width:10.9px;height:10.0px;background:#ffe8e8"></div>
<div class="a" style="left:159.8px;top:815.5px;width:10.9px;height:10.0px;background:#5050c0"></div>
<div class="a" style="left:171.6px;top:815.5px;width:10.9px;height:10.0px;background:#d8a098"></div>
<div class="a" style="left:183.5px;top:815.5px;width:10.9px;height:10.0px;background:#605048"></div>
<div class="a" style="left:195.4px;top:815.5px;width:10.9px;height:10.0px;background:#583830"></div>
<div class="a" style="left:207.2px;top:815.5px;width:10.9px;height:10.0px;background:#ffd0d8"></div>
<div class="a" style="left:219.1px;top:815.5px;width:10.9px;height:10.0px;background:#b84820"></div>
<div class="a" style="left:41.0px;top:826.5px;width:10.9px;height:10.0px;background:#483838"></div>
<div class="a" style="left:52.9px;top:826.5px;width:10.9px;height:10.0px;background:#403838"></div>
<div class="a" style="left:64.8px;top:826.5px;width:10.9px;height:10.0px;background:#609040"></div>
<div class="a" style="left:76.6px;top:826.5px;width:10.9px;height:10.0px;background:#2088c0"></div>
<div class="a" style="left:88.5px;top:826.5px;width:10.9px;height:10.0px;background:#b86820"></div>
<div class="a" style="left:100.4px;top:826.5px;width:10.9px;height:10.0px;background:#90d0b0"></div>
<div class="a" style="left:112.2px;top:826.5px;width:10.9px;height:10.0px;background:#a8a8a8"></div>
<div class="a" style="left:124.1px;top:826.5px;width:10.9px;height:10.0px;background:#e0e0e0"></div>
<div class="a" style="left:136.0px;top:826.5px;width:10.9px;height:10.0px;background:#8060a8"></div>
<div class="a" style="left:147.9px;top:826.5px;width:10.9px;height:10.0px;background:#604888"></div>
<div class="a" style="left:159.8px;top:826.5px;width:10.9px;height:10.0px;background:#e88068"></div>
<div class="a" style="left:171.6px;top:826.5px;width:10.9px;height:10.0px;background:#e8e0d0"></div>
<div class="a" style="left:183.5px;top:826.5px;width:10.9px;height:10.0px;background:#302058"></div>
<div class="a" style="left:195.4px;top:826.5px;width:10.9px;height:10.0px;background:#604888"></div>
<div class="a" style="left:207.2px;top:826.5px;width:10.9px;height:10.0px;background:#308030"></div>
<div class="a" style="left:219.1px;top:826.5px;width:10.9px;height:10.0px;background:#a0a0a0"></div>
<div class="a" style="left:41.0px;top:837.5px;width:10.9px;height:10.0px;background:#604888"></div>
<div class="a" style="left:52.9px;top:837.5px;width:10.9px;height:10.0px;background:#f8b070"></div>
<div class="a" style="left:64.8px;top:837.5px;width:10.9px;height:10.0px;background:#989898"></div>
<div class="a" style="left:76.6px;top:837.5px;width:10.9px;height:10.0px;background:#980808"></div>
<div class="a" style="left:88.5px;top:837.5px;width:10.9px;height:10.0px;background:#e09040"></div>
<div class="a" style="left:100.4px;top:837.5px;width:10.9px;height:10.0px;background:#8c5020"></div>
<div class="a" style="left:112.2px;top:837.5px;width:10.9px;height:10.0px;background:#d08030"></div>
<div class="a" style="left:124.1px;top:837.5px;width:10.9px;height:10.0px;background:#482810"></div>
<div class="a" style="left:136.0px;top:837.5px;width:10.9px;height:10.0px;background:#683810"></div>
<div class="a" style="left:147.9px;top:837.5px;width:10.9px;height:10.0px;background:#a88830"></div>
<div class="a" style="left:159.8px;top:837.5px;width:10.9px;height:10.0px;background:#f8c080"></div>
<div class="a" style="left:171.6px;top:837.5px;width:10.9px;height:10.0px;background:#a8b0a0"></div>
<div class="a" style="left:183.5px;top:837.5px;width:10.9px;height:10.0px;background:#d0c0c0"></div>
<div class="a" style="left:195.4px;top:837.5px;width:10.9px;height:10.0px;background:#a08888"></div>
<div class="a" style="left:207.2px;top:837.5px;width:10.9px;height:10.0px;background:#e0d8d0"></div>
<div class="a" style="left:219.1px;top:837.5px;width:10.9px;height:10.0px;background:#a09888"></div>
<div class="a" style="left:41.0px;top:848.5px;width:10.9px;height:10.0px;background:#a89090"></div>
<div class="a" style="left:52.9px;top:848.5px;width:10.9px;height:10.0px;background:#d0d0d0"></div>
<div class="a" style="left:64.8px;top:848.5px;width:10.9px;height:10.0px;background:#ff1010"></div>
<div class="a" style="left:76.6px;top:848.5px;width:10.9px;height:10.0px;background:#b0c0c8"></div>
<div class="a" style="left:88.5px;top:848.5px;width:10.9px;height:10.0px;background:#b0b8c0"></div>
<div class="a" style="left:100.4px;top:848.5px;width:10.9px;height:10.0px;background:#b0c8c0"></div>
<div class="a" style="left:112.2px;top:848.5px;width:10.9px;height:10.0px;background:#b0c8b0"></div>
<div class="a" style="left:124.1px;top:848.5px;width:10.9px;height:10.0px;background:#d0c8b8"></div>
<div class="a" style="left:136.0px;top:848.5px;width:10.9px;height:10.0px;background:#808080"></div>
<div class="a" style="left:147.9px;top:848.5px;width:10.9px;height:10.0px;background:#a88888"></div>
<div class="a" style="left:159.8px;top:848.5px;width:10.9px;height:10.0px;background:#303030"></div>
<div class="a" style="left:171.6px;top:848.5px;width:10.9px;height:10.0px;background:#404040"></div>
<div class="a" style="left:183.5px;top:848.5px;width:10.9px;height:10.0px;background:#888888"></div>
<div class="a" style="left:195.4px;top:848.5px;width:10.9px;height:10.0px;background:#d0d0d0"></div>
<div class="a" style="left:207.2px;top:848.5px;width:10.9px;height:10.0px;background:#f0f4f8"></div>
<div class="a" style="left:219.1px;top:848.5px;width:10.9px;height:10.0px;background:#a0a0a0"></div>
<div class="a" style="left:41.0px;top:859.5px;width:10.9px;height:10.0px;background:#909098"></div>
<div class="a" style="left:52.9px;top:859.5px;width:10.9px;height:10.0px;background:#d8d8d8"></div>
<div class="a" style="left:64.8px;top:859.5px;width:10.9px;height:10.0px;background:#e8e8e8"></div>
<div class="a" style="left:76.6px;top:859.5px;width:10.9px;height:10.0px;background:#a0a0a8"></div>
<div class="a" style="left:88.5px;top:859.5px;width:10.9px;height:10.0px;background:#b0b0b0"></div>
<div class="a" style="left:100.4px;top:859.5px;width:10.9px;height:10.0px;background:#909090"></div>
<div class="a" style="left:112.2px;top:859.5px;width:10.9px;height:10.0px;background:#909098"></div>
<div class="a" style="left:124.1px;top:859.5px;width:10.9px;height:10.0px;background:#808080"></div>
<div class="a" style="left:136.0px;top:859.5px;width:10.9px;height:10.0px;background:#686870"></div>
<div class="a" style="left:147.9px;top:859.5px;width:10.9px;height:10.0px;background:#606068"></div>
<div class="a" style="left:159.8px;top:859.5px;width:10.9px;height:10.0px;background:#ffe8a0"></div>
<div class="a" style="left:171.6px;top:859.5px;width:10.9px;height:10.0px;background:#905048"></div>
<div class="a" style="left:183.5px;top:859.5px;width:10.9px;height:10.0px;background:#305858"></div>
<div class="a" style="left:195.4px;top:859.5px;width:10.9px;height:10.0px;background:#f8f8f8"></div>
<div class="a" style="left:207.2px;top:859.5px;width:10.9px;height:10.0px;background:#d8e0e8"></div>
<div class="a" style="left:219.1px;top:859.5px;width:10.9px;height:10.0px;background:#e0e4e8"></div>
<div class="a" style="left:41.0px;top:870.5px;width:10.9px;height:10.0px;background:#d0d0d0"></div>
<div class="a" style="left:52.9px;top:870.5px;width:10.9px;height:10.0px;background:#506070"></div>
<div class="a" style="left:64.8px;top:870.5px;width:10.9px;height:10.0px;background:#402020"></div>
<div class="a" style="left:76.6px;top:870.5px;width:10.9px;height:10.0px;background:#403020"></div>
<div class="a" style="left:88.5px;top:870.5px;width:10.9px;height:10.0px;background:#b0b8a0"></div>
<div class="a" style="left:100.4px;top:870.5px;width:10.9px;height:10.0px;background:#885048"></div>
<div class="a" style="left:112.2px;top:870.5px;width:10.9px;height:10.0px;background:#a84820"></div>
<div class="a" style="left:124.1px;top:870.5px;width:10.9px;height:10.0px;background:#983818"></div>
<div class="a" style="left:136.0px;top:870.5px;width:10.9px;height:10.0px;background:#b84820"></div>
<div class="a" style="left:147.9px;top:870.5px;width:10.9px;height:10.0px;background:#904018"></div>
<div class="a" style="left:159.8px;top:870.5px;width:10.9px;height:10.0px;background:#884040"></div>
<div class="a" style="left:171.6px;top:870.5px;width:10.9px;height:10.0px;background:#d8c088"></div>
<div class="a" style="left:183.5px;top:870.5px;width:10.9px;height:10.0px;background:#383030"></div>
<div class="a" style="left:195.4px;top:870.5px;width:10.9px;height:10.0px;background:#383838"></div>
<div class="a" style="left:207.2px;top:870.5px;width:10.9px;height:10.0px;background:#a82820"></div>
<div class="a" style="left:219.1px;top:870.5px;width:10.9px;height:10.0px;background:#302020"></div>
<div class="a" style="left:41.0px;top:881.5px;width:10.9px;height:0.5px;background:#402020"></div>
<div class="a" style="left:52.9px;top:881.5px;width:10.9px;height:0.5px;background:#2040c0"></div>
<div class="a" style="left:64.8px;top:881.5px;width:10.9px;height:0.5px;background:#a0a090"></div>
<div class="a" style="left:76.6px;top:881.5px;width:10.9px;height:0.5px;background:#a09890"></div>
<div class="a" style="left:88.5px;top:881.5px;width:10.9px;height:0.5px;background:#807090"></div>
<div class="a" style="left:100.4px;top:881.5px;width:10.9px;height:0.5px;background:#909080"></div>
<div class="a" style="left:112.2px;top:881.5px;width:10.9px;height:0.5px;background:#408080"></div>
<div class="a" style="left:124.1px;top:881.5px;width:10.9px;height:0.5px;background:#e02020"></div>
<div class="a" style="left:136.0px;top:881.5px;width:10.9px;height:0.5px;background:#204080"></div>
<div class="a" style="left:147.9px;top:881.5px;width:10.9px;height:0.5px;background:#a07070"></div>
<div class="a" style="left:159.8px;top:881.5px;width:10.9px;height:0.5px;background:#ffffff"></div>
<div class="a" style="left:171.6px;top:881.5px;width:10.9px;height:0.5px;background:#c0a060"></div>
<div class="a" style="left:183.5px;top:881.5px;width:10.9px;height:0.5px;background:#40a080"></div>
<div class="a" style="left:195.4px;top:881.5px;width:10.9px;height:0.5px;background:#a09080"></div>
<div class="a" style="left:207.2px;top:881.5px;width:10.9px;height:0.5px;background:#20a0c0"></div>
<div class="a" style="left:219.1px;top:881.5px;width:10.9px;height:0.5px;background:#40a0a0"></div>
<div class="a" style="left:147.4px;top:738px;width:12.9px;height:12px;border:2px solid #e01010;background:#000"></div>
<div class="a" style="left:230px;top:738px;width:13px;height:145px;background:#474747;"></div>
<div class="a" style="left:231px;top:739px;width:11px;height:13px;background:#5a5a5a;border-radius:2px"></div>
<svg class="a" style="left:231px;top:739px;" width="11" height="13" viewBox="0 0 11 13" fill="none"><path d="M3 8L5.5 5.5L8 8" stroke="#c0c0c0" stroke-width="1.1"/></svg>
<div class="a" style="left:232px;top:753px;width:9px;height:22px;background:#555555;border-radius:4px"></div>
<div class="a" style="left:231px;top:870px;width:11px;height:13px;background:#5a5a5a;border-radius:2px"></div>
<svg class="a" style="left:231px;top:870px;" width="11" height="13" viewBox="0 0 11 13" fill="none"><path d="M3 5L5.5 7.5L8 5" stroke="#c0c0c0" stroke-width="1.1"/></svg>
<div class="a" style="left:39px;top:883px;width:205px;height:13px;background:#474747;"></div>
<div class="a" style="left:39px;top:886px;width:8px;height:8px;background:#c00000;border:1px solid #222"></div>
<div class="a" style="left:71px;top:886px;width:8px;height:8px;background:#00b000;border:1px solid #222"></div>
<div class="a" style="left:103px;top:886px;width:8px;height:8px;background:#0000e0;border:1px solid #222"></div>
<div class="a" style="left:0px;top:896px;width:244px;height:2px;background:#1e1e1e;"></div>
<div class="a" style="left:244px;top:73px;width:934px;height:20px;background:#3a3a3a;"></div>
<div class="a" style="left:244px;top:73px;width:100px;height:20px;background:#4b4b4b;"></div>
<div class="a" style="left:329px;top:80px;width:6px;height:6px;border-radius:50%;background:#a8a8a8"></div>
<div class="a" style="left:344px;top:73px;width:100px;height:20px;background:#66718f;"></div>
<div class="t" style="left:346.64px;top:77.00px;font-size:12px;color:#dcdcdc;transform:scaleX(0.6818);transform-origin:0 0;--nw:48.00;--sx:0.6818;">コミック</div>
<svg class="a" style="left:428px;top:78px;" width="10" height="10" viewBox="0 0 10 10" fill="none"><path d="M2 2L8 8M8 2L2 8" stroke="#a8aec0" stroke-width="2.2"/></svg>
<svg class="a" style="left:1166px;top:77px;" width="12" height="8" viewBox="0 0 12 8" fill="none"><path d="M3 2.5L6 5.5L9 2.5" stroke="#b8b8b8" stroke-width="1.2"/></svg>
<div class="a" style="left:244px;top:93px;width:934px;height:1px;background:#555555;"></div>
<div class="a" style="left:244px;top:94px;width:922px;height:790px;background:#2e2e2e;"></div>
<div class="a" style="left:435px;top:105px;width:542px;height:769px;background:#ffffff;"></div>
<div class="a" style="left:1166px;top:94px;width:12px;height:790px;background:#444444;"></div>
<div class="a" style="left:1166px;top:95px;width:12px;height:12px;background:#555555;border-radius:2px"></div>
<svg class="a" style="left:1166px;top:95px;" width="12" height="12" viewBox="0 0 12 12" fill="none"><path d="M3 7.5L6 4.5L9 7.5" stroke="#c8c8c8" stroke-width="1.1"/></svg>
<div class="a" style="left:1166px;top:872px;width:12px;height:12px;background:#555555;border-radius:2px"></div>
<svg class="a" style="left:1166px;top:872px;" width="12" height="12" viewBox="0 0 12 12" fill="none"><path d="M3 4.5L6 7.5L9 4.5" stroke="#c8c8c8" stroke-width="1.1"/></svg>
<div class="a" style="left:244px;top:884px;width:934px;height:12px;background:#404040;"></div>
<div class="a" style="left:1166px;top:884px;width:12px;height:12px;background:#3c3c3c;"></div>
<div class="a" style="left:245px;top:885px;width:98px;height:11px;background:#4a4a4a;border:1px solid #606060"></div>
<svg class="a" style="left:246px;top:886px;" width="96" height="9" viewBox="0 0 96 9" fill="none"><path d="M0 9L34 9L34 5Z" fill="#3a3a3a"/><path d="M36 9L96 9L96 0Z" fill="#3a3a3a"/><path d="M35 0V9" stroke="#6a6a6a" stroke-width="1.5"/></svg>
<div class="t" style="left:323.18px;top:885.00px;font-size:12px;color:#f0f0f0;transform:scaleX(0.8182);transform-origin:0 0;--nw:23.36;--sx:0.8182;">15.5</div>
<svg class="a" style="left:348px;top:884px;" width="55" height="12" viewBox="0 0 55 12" fill="none"><path d="M3 6.5H12M23 6.5H32M27.5 2V11" stroke="#8c8c8c" stroke-width="1.6"/><rect x="45" y="3" width="7" height="7" fill="#a8a8a8"/></svg>
<div class="a" style="left:406px;top:885px;width:97px;height:11px;background:#3a3a3a;border:1px solid #606060"></div>
<svg class="a" style="left:407px;top:886px;" width="95" height="9" viewBox="0 0 95 9" fill="none"><path d="M0 0H47V9H0Z" fill="#4a4a4a"/><path d="M0 0L6 9H0Z" fill="#3a3a3a"/><path d="M41 9L47 0V9Z" fill="#3a3a3a"/><path d="M48 0H95L95 9L80 0Z" fill="#3a3a3a"/><path d="M48 0V9" stroke="#6a6a6a" stroke-width="1.5"/><path d="M50 0H78L95 9H50Z" fill="#4a4a4a"/></svg>
<div class="t" style="left:412.00px;top:885.00px;font-size:12px;color:#f0f0f0;transform:scaleX(0.8125);transform-origin:0 0;--nw:16.69;--sx:0.8125;">0.0</div>
<svg class="a" style="left:506px;top:884px;" width="72" height="12" viewBox="0 0 72 12" fill="none"><g stroke="#a8a8a8" stroke-width="1.2" fill="none"><path d="M7 5A4 4 0 1 1 6 10"/><path d="M3 3.5V7H7" /><path d="M33 5A4 4 0 1 0 34 10"/><path d="M37 3.5V7H33"/><circle cx="54" cy="6.5" r="4.5"/><path d="M54 2V6.5"/></g></svg>
<div class="a" style="left:566px;top:885px;width:10px;height:11px;background:#555555;border-radius:2px"></div>
<svg class="a" style="left:566px;top:885px;" width="10" height="11" viewBox="0 0 10 11" fill="none"><path d="M6.5 2.5L3.5 5.5L6.5 8.5" stroke="#c0c0c0" stroke-width="1.1"/></svg>
<div class="a" style="left:728px;top:885px;width:274px;height:10px;background:#555555;border-radius:5px"></div>
<div class="a" style="left:1154px;top:885px;width:12px;height:11px;background:#555555;border-radius:2px"></div>
<svg class="a" style="left:1154px;top:885px;" width="12" height="11" viewBox="0 0 12 11" fill="none"><path d="M4.5 2.5L7.5 5.5L4.5 8.5" stroke="#c0c0c0" stroke-width="1.1"/></svg>
<div class="a" style="left:244px;top:896px;width:1195px;height:2px;background:#1e1e1e;"></div>
<div class="a" style="left:1178px;top:67px;width:42px;height:829px;background:#3c3c3c;"></div>
<div class="a" style="left:1217px;top:67px;width:3px;height:829px;background:#333333;"></div>
<svg class="a" style="left:1178px;top:46px;" width="261" height="20" viewBox="0 0 261 20" fill="none"><path d="M1190 5L1186.5 10L1190 15" transform="translate(-1178,0)" stroke="#9a9a9a"/><path d="M1206 5L1209.5 10L1206 15M1210.5 5L1214 10L1210.5 15" transform="translate(-1178,0)" stroke="#9a9a9a"/><path d="M47.5 4V16M49.5 4V16M51.5 4V16" stroke="#9a9a9a" stroke-width="0.9"/><path d="M226 5L229.5 10L226 15" stroke="#9a9a9a"/><path d="M248 5L251.5 10L248 15M252.5 5L256 10L252.5 15" stroke="#9a9a9a"/></svg>
<div class="a" style="left:1183px;top:68px;width:32px;height:31px;background:#4d4d4d;"></div>
<div class="a" style="left:1183px;top:105px;width:32px;height:31px;background:#4d4d4d;"></div>
<div class="a" style="left:1183px;top:141px;width:32px;height:31px;background:#4d4d4d;"></div>
<div class="a" style="left:1183px;top:177px;width:32px;height:31px;background:#4d4d4d;"></div>
<svg class="a" style="left:1183px;top:68px;" width="32" height="140" viewBox="0 0 32 140" fill="none"><g stroke="#c8c8c8" stroke-width="1.3" fill="none"><path d="M7.5 9.5V7.5H14L16 9.5H24.5V23.5H7.5Z"/><path d="M12 13L20 21M20 13L12 21" stroke-width="2.6"/><path d="M7.5 45.5V43.5H14L16 45.5H24.5V59.5H7.5Z"/><rect x="11.5" y="48.5" width="9" height="8"/><path d="M14.5 56.5V53Q16 50.5 17.5 53V56.5"/><path d="M7.5 81.5V79.5H14L16 81.5H24.5V95.5H7.5Z"/><path d="M12 85L20 93M20 85L12 93" stroke-width="2.6"/><path d="M7.5 117.5V115.5H14L16 117.5H24.5V131.5H7.5Z"/></g><g fill="#c8c8c8"><rect x="10" y="120" width="2" height="2"/><rect x="14" y="120" width="2" height="2"/><rect x="18" y="120" width="2" height="2"/><rect x="12" y="122" width="2" height="2"/><rect x="16" y="122" width="2" height="2"/><rect x="20" y="122" width="2" height="2"/><rect x="10" y="124" width="2" height="2"/><rect x="14" y="124" width="2" height="2"/><rect x="18" y="124" width="2" height="2"/><rect x="12" y="126" width="2" height="2"/><rect x="16" y="126" width="2" height="2"/><rect x="20" y="126" width="2" height="2"/><rect x="10" y="128" width="2" height="2"/><rect x="14" y="128" width="2" height="2"/><rect x="18" y="128" width="2" height="2"/></g></svg>
<div class="a" style="left:1220px;top:67px;width:219px;height:829px;background:#404040;"></div>
<div class="a" style="left:1220px;top:67px;width:219px;height:16px;background:#3a3a3a;"></div>
<svg class="a" style="left:1224px;top:71px;" width="12" height="10" viewBox="0 0 12 10" fill="none"><path d="M2 1.5H9M2 4.5H9M2 7.5H9" stroke="#a8a8a8" stroke-width="1"/></svg>
<div class="a" style="left:1239px;top:70px;width:29px;height:13px;background:#4a4a4a;"></div>
<div class="a" style="left:1338px;top:70px;width:29px;height:13px;background:#4a4a4a;"></div>
<div class="a" style="left:1368px;top:70px;width:29px;height:13px;background:#4a4a4a;"></div>
<div class="a" style="left:1269px;top:70px;width:68px;height:14px;background:#4b4b4b;"></div>
<div class="a" style="left:1220px;top:83px;width:217px;height:6px;background:#4b4b4b;"></div>
<svg class="a" style="left:1239px;top:70px;" width="160" height="13" viewBox="0 0 160 13" fill="none"><g stroke="#7e7e7e" stroke-width="1.2" fill="none"><path d="M7.5 13V8Q7.5 5.5 10 5.5H19"/><rect x="10.5" y="7.5" width="11" height="9" rx="1.5"/><path d="M107 13A7 7 0 0 1 121 13M108 9.5H120"/><circle cx="144" cy="12" r="8.5"/><path d="M144 10V16"/></g><rect x="12" y="9" width="8" height="6" fill="#7e7e7e"/><circle cx="144" cy="7" r="1.1" fill="#7e7e7e"/></svg>
<svg class="a" style="left:1275px;top:72px;" width="16" height="16" viewBox="0 0 16 16" fill="none"><rect x="1.5" y="1.5" width="13" height="13" rx="2" stroke="#c8c8c8" stroke-width="1.3" fill="none"/><path d="M4 12V8.5L6.5 6.5L9 9L12 7V12Z" fill="#8a8a8a"/></svg>
<div class="t" style="left:1296.98px;top:76.20px;font-size:11.5px;color:#d0d0d0;transform:scaleX(0.6241);transform-origin:0 0;--nw:60.00;--sx:0.6241;">サブビュー</div>
<div class="a" style="left:1220px;top:89px;width:219px;height:37px;background:#2e2e2e;"></div>
<div class="a" style="left:1220px;top:126px;width:219px;height:63px;background:#4b4b4b;"></div>
<div class="a" style="left:1225px;top:133px;width:103px;height:12px;border:1px solid #6a6a6a;background:#4b4b4b"></div>
<svg class="a" style="left:1226px;top:134px;" width="101" height="10" viewBox="0 0 101 10" fill="none"><path d="M0 10L101 0V10Z" fill="#353535"/></svg>
<div class="a" style="left:1225px;top:153px;width:104px;height:12px;border:1px solid #6a6a6a;background:#4b4b4b"></div>
<svg class="a" style="left:1226px;top:154px;" width="102" height="10" viewBox="0 0 102 10" fill="none"><path d="M0 0L20 10H40Q55 0 75 0Q85 0 102 10Z" fill="#353535"/><path d="M0 0V10H20Z" fill="#353535"/></svg>
<svg class="a" style="left:1330px;top:128px;" width="109" height="62" viewBox="0 0 109 62" fill="none"><g stroke="#7a7a7a" stroke-width="1.2" fill="none"><circle cx="55" cy="11" r="7.5"/><path d="M51 11H59"/><circle cx="75" cy="11" r="7.5"/><path d="M71 11H79M75 7V15"/><path d="M88.5 3V19"/><rect x="92.5" y="4.5" width="8" height="8"/><rect x="96.5" y="9.5" width="8" height="8"/><path d="M12 26A6 6 0 1 1 9 35"/><path d="M8 28L11 33"/><path d="M31 26A6 6 0 1 0 34 35"/><circle cx="54" cy="31" r="6.5"/><path d="M54 25V31"/><path d="M65.5 24V38"/><path d="M70 26V36L75 31ZM85 26V36L80 31Z"/><path d="M93 27H104L98.5 33ZM93 38H104L98.5 34Z" fill="#7a7a7a"/><path d="M40 46L34 51L40 56M51 46L57 51L51 56"/><path d="M92.5 46V56"/></g><path d="M70 45H76L78 47H85V57H70Z" fill="#b0b0b0"/><path d="M80 48L84 44" stroke="#b0b0b0"/><g stroke="#7a7a7a" stroke-width="1.2" fill="none"><path d="M92 46H104M94 46L95 58H101L102 46M96.5 49V56M99.5 49V56"/></g></svg>
<svg class="a" style="left:1222px;top:171px;" width="18" height="18" viewBox="0 0 18 18" fill="none"><path d="M2 16L4 11L11 4L14 7L7 14Z" stroke="#b8b8b8" stroke-width="1.2" fill="none"/><path d="M11 4L13 2L16 5L14 7" fill="#b8b8b8" stroke="#b8b8b8"/></svg>
<div class="a" style="left:1220px;top:189px;width:219px;height:18px;background:#3a3a3a;"></div>
<svg class="a" style="left:1224px;top:193px;" width="12" height="10" viewBox="0 0 12 10" fill="none"><path d="M2 1.5H9M2 4.5H9M2 7.5H9" stroke="#a8a8a8" stroke-width="1"/></svg>
<div class="a" style="left:1239px;top:192px;width:94px;height:15px;background:#4b4b4b;"></div>
<svg class="a" style="left:1243px;top:193px;" width="20" height="14" viewBox="0 0 20 14" fill="none"><circle cx="10" cy="10" r="6.5" stroke="#c8c8c8" stroke-width="1.4" fill="none"/><path d="M8 8L12 12M8 8H11M8 8V11" stroke="#c8c8c8" stroke-width="1.4"/></svg>
<div class="t" style="left:1265.56px;top:199.00px;font-size:11px;color:#c8c8c8;transform:scaleX(0.7176);transform-origin:0 0;--nw:88.00;--sx:0.7176;">クイックアクセス</div>
<div class="a" style="left:1410px;top:207px;width:29px;height:689px;background:#3a3a3a;"></div>
<div class="a" style="left:1410px;top:208px;width:28px;height:5px;background:#4f4f4f;"></div>
<div class="a" style="left:1408px;top:214px;width:28px;height:25px;background:#414141;border:1.5px solid #262626;border-radius:4px"></div>
<div class="a" style="left:1410px;top:242px;width:27px;height:154px;background:#4b4b4b;"></div>
<div class="a" style="left:1425px;top:242px;width:12px;height:154px;background:#454545;"></div>
<div class="a" style="left:1426px;top:243px;width:11px;height:12px;background:#555;border-radius:2px"></div>
<svg class="a" style="left:1426px;top:243px;" width="11" height="12" viewBox="0 0 11 12" fill="none"><path d="M3 7L5.5 4.5L8 7" stroke="#c8c8c8" stroke-width="1.1"/></svg>
<div class="a" style="left:1427px;top:256px;width:9px;height:22px;background:#555;border-radius:4px"></div>
<div class="a" style="left:1426px;top:390px;width:11px;height:12px;background:#555;border-radius:2px"></div>
<svg class="a" style="left:1426px;top:390px;" width="11" height="12" viewBox="0 0 11 12" fill="none"><path d="M3 5L5.5 7.5L8 5" stroke="#c8c8c8" stroke-width="1.1"/></svg>
<div class="a" style="left:1410px;top:402px;width:29px;height:19px;background:#383838;"></div>
<div class="a" style="left:1410px;top:404px;width:10px;height:16px;background:#4a4a4a;"></div>
<div class="a" style="left:1410px;top:421px;width:29px;height:73px;background:#474747;"></div>
<div class="t" style="left:1411.00px;top:433.00px;font-size:11px;color:#e8e8e8;transform:scaleX(0.8500);transform-origin:0 0;--nw:12.25;--sx:0.8500;">00</div>
<svg class="a" style="left:1424px;top:426px;" width="14" height="20" viewBox="0 0 14 20" fill="none"><path d="M3 7.5L7 3.5L11 7.5M3 12.5L7 16.5L11 12.5" stroke="#ccc" stroke-width="1.1" fill="none"/></svg>
<div class="a" style="left:1410px;top:451px;width:6px;height:7px;background:#2a7ad8;"></div>
<div class="a" style="left:1413px;top:454px;width:7px;height:9px;background:#ffffff;"></div>
<div class="a" style="left:1422px;top:448px;width:16px;height:19px;background:#4a4a4a;border:1px solid #666;border-radius:2px"></div>
<svg class="a" style="left:1422px;top:448px;" width="16" height="19" viewBox="0 0 16 19" fill="none"><path d="M4 8L8 12L12 8" stroke="#ccc" stroke-width="1.1" fill="none"/></svg>
<svg class="a" style="left:1420px;top:471px;" width="16" height="20" viewBox="0 0 16 20" fill="none"><path d="M1.5 4.5H14.5M5 4.5V2.5H11V4.5M3 4.5L4 18.5H12L13 4.5M6.5 7V16M9.5 7V16" stroke="#c0c0c0" stroke-width="1.1" fill="none"/></svg>
<div class="a" style="left:1410px;top:495px;width:15px;height:39px;background:#5e6a85;"></div>
<div class="a" style="left:1425px;top:494px;width:14px;height:402px;background:#3a3a3a;"></div>
<div class="a" style="left:1410px;top:575px;width:15px;height:1px;background:#262626;"></div>
<div class="a" style="left:1050px;top:207px;width:360px;height:580px;background:#3b3b3b;box-shadow:2px 3px 4px rgba(0,0,0,0.45)"></div>
<div class="t" style="left:1203.96px;top:213.00px;font-size:10px;color:#9c9c9c;transform:scaleX(0.7397);transform-origin:0 0;--nw:70.00;--sx:0.7397;">サブツール詳細</div>
<svg class="a" style="left:1392px;top:212px;" width="10" height="10" viewBox="0 0 10 10" fill="none"><path d="M1.5 1.5L8.5 8.5M8.5 1.5L1.5 8.5" stroke="#d0d0d0" stroke-width="1.1"/></svg>
<div class="a" style="left:1055px;top:225px;width:350px;height:557px;background:#3e3e3e;border:1px solid #555"></div>
<div class="a" style="left:1056px;top:226px;width:348px;height:101px;background:#262626;"></div>
<div class="a" style="left:1057px;top:228px;width:173px;height:98px;background:#bdbdbd;"></div>
<div class="a" style="left:1230px;top:228px;width:173px;height:98px;background:#4f4f4f;"></div>
<div class="a" style="left:1086px;top:232px;width:288px;height:90px;border:9.5px solid #000;border-radius:13px"></div>
<div class="a" style="left:1057px;top:228px;width:41px;height:15px;background:rgba(80,80,80,0.55);border-radius:2px"></div>
<div class="t" style="left:1056.97px;top:229.00px;font-size:12px;color:#f4f4f4;transform:scaleX(1.0294);transform-origin:0 0;--nw:36.00;--sx:1.0294;">長方形</div>
<div class="a" style="left:1056px;top:327px;width:90px;height:433px;background:#3c3c3c;"></div>
<div class="a" style="left:1058px;top:329px;width:86px;height:16px;background:#5e6a85;border-radius:3px"></div>
<div class="t" style="left:1058.95px;top:330.00px;font-size:12px;color:#e8e8e8;transform:scaleX(1.0455);transform-origin:0 0;--nw:24.00;--sx:1.0455;">図形</div>
<div class="t" style="left:1058.98px;top:348.00px;font-size:12px;color:#e8e8e8;transform:scaleX(1.0217);transform-origin:0 0;--nw:48.00;--sx:1.0217;">図形操作</div>
<div class="t" style="left:1059.23px;top:366.00px;font-size:12px;color:#e8e8e8;transform:scaleX(0.7690);transform-origin:0 0;--nw:72.00;--sx:0.7690;">ブラシサイズ</div>
<div class="t" style="left:1059.21px;top:384.00px;font-size:12px;color:#e8e8e8;transform:scaleX(0.7879);transform-origin:0 0;--nw:36.00;--sx:0.7879;">インク</div>
<div class="t" style="left:1059.26px;top:402.00px;font-size:12px;color:#e8e8e8;transform:scaleX(0.7398);transform-origin:0 0;--nw:96.00;--sx:0.7398;">アンチエイリアス</div>
<div class="t" style="left:1059.13px;top:420.00px;font-size:12px;color:#e8e8e8;transform:scaleX(0.8707);transform-origin:0 0;--nw:60.00;--sx:0.8707;">ブラシ形状</div>
<div class="t" style="left:1067.14px;top:438.00px;font-size:12px;color:#e8e8e8;transform:scaleX(0.8621);transform-origin:0 0;--nw:60.00;--sx:0.8621;">ブラシ先端</div>
<div class="t" style="left:1068.00px;top:456.00px;font-size:12px;color:#e8e8e8;transform:scaleX(0.9915);transform-origin:0 0;--nw:48.00;--sx:0.9915;">散布効果</div>
<div class="t" style="left:1067.23px;top:474.00px;font-size:12px;color:#e8e8e8;transform:scaleX(0.7719);transform-origin:0 0;--nw:60.00;--sx:0.7719;">ストローク</div>
<div class="t" style="left:1068.00px;top:492.00px;font-size:12px;color:#e8e8e8;--nw:24.00;--sx:1.0000;">紙質</div>
<div class="t" style="left:1060.00px;top:510.00px;font-size:12px;color:#e8e8e8;transform:scaleX(0.9583);transform-origin:0 0;--nw:24.00;--sx:0.9583;">補正</div>
<div class="a" style="left:1059px;top:743px;width:14px;height:14px;background:#5a5a5a;border:1px solid #6a6a6a;border-radius:2px"></div>
<div class="t" style="left:1075.68px;top:744.00px;font-size:12px;color:#e8e8e8;transform:scaleX(0.8155);transform-origin:0 0;--nw:72.00;--sx:0.8155;">カテゴリ表示</div>
<div class="a" style="left:1146px;top:327px;width:258px;height:50px;background:#4b4b4b;"></div>
<div class="t" style="left:1149.58px;top:345.50px;font-size:12px;color:#ececec;transform:scaleX(0.9222);transform-origin:0 0;--nw:144.00;--sx:0.9222;">図形の形状を設定します。</div>
<div class="a" style="left:1146px;top:377px;width:258px;height:275px;background:#3e3e3e;"></div>
<div class="a" style="left:1404px;top:377px;width:1px;height:275px;background:#555555;"></div>
<div class="a" style="left:1149px;top:380px;width:14px;height:24px;background:#4a4a4a;border:1px solid #595959;border-radius:2px"></div>
<div class="a" style="left:1165px;top:380px;width:11px;height:24px;background:#4a4a4a;border:1px solid #595959;border-radius:2px"></div>
<svg class="a" style="left:1165px;top:387px;" width="11" height="10" viewBox="0 0 11 10" fill="none"><path d="M3.5 1.5L8.5 5L3.5 8.5Z" fill="#c0c0c0"/></svg>
<div class="a" style="left:1149px;top:409px;width:14px;height:23px;background:#4a4a4a;border:1px solid #595959;border-radius:2px"></div>
<div class="a" style="left:1165px;top:409px;width:11px;height:23px;background:#4a4a4a;border:1px solid #595959;border-radius:2px"></div>
<svg class="a" style="left:1165px;top:415px;" width="11" height="10" viewBox="0 0 11 10" fill="none"><path d="M3.5 1.5L8.5 5L3.5 8.5Z" fill="#c0c0c0"/></svg>
<div class="a" style="left:1149px;top:438px;width:14px;height:25px;background:#5e6a85;border:1px solid #5e6a85;border-radius:2px"></div>
<div class="a" style="left:1165px;top:438px;width:11px;height:25px;background:#4a4a4a;border:1px solid #595959;border-radius:2px"></div>
<svg class="a" style="left:1165px;top:445px;" width="11" height="10" viewBox="0 0 11 10" fill="none"><path d="M3.5 1.5L8.5 5L3.5 8.5Z" fill="#c0c0c0"/></svg>
<svg class="a" style="left:1149px;top:445px;" width="14" height="10" viewBox="0 0 14 10" fill="none"><path d="M2 5Q7 0 12 5Q7 10 2 5Z" stroke="#c8cde0" stroke-width="1" fill="none"/><circle cx="7" cy="5" r="2" fill="#c8cde0"/></svg>
<div class="a" style="left:1149px;top:469px;width:14px;height:23.5px;background:#4a4a4a;border:1px solid #595959;border-radius:2px"></div>
<div class="a" style="left:1165px;top:469px;width:11px;height:23.5px;background:#4a4a4a;border:1px solid #595959;border-radius:2px"></div>
<svg class="a" style="left:1165px;top:475px;" width="11" height="10" viewBox="0 0 11 10" fill="none"><path d="M3.5 1.5L8.5 5L3.5 8.5Z" fill="#c0c0c0"/></svg>
<div class="a" style="left:1149px;top:498px;width:14px;height:23.5px;background:#5e6a85;border:1px solid #5e6a85;border-radius:2px"></div>
<div class="a" style="left:1165px;top:498px;width:11px;height:23.5px;background:#4a4a4a;border:1px solid #595959;border-radius:2px"></div>
<svg class="a" style="left:1165px;top:504px;" width="11" height="10" viewBox="0 0 11 10" fill="none"><path d="M3.5 1.5L8.5 5L3.5 8.5Z" fill="#c0c0c0"/></svg>
<svg class="a" style="left:1149px;top:504px;" width="14" height="10" viewBox="0 0 14 10" fill="none"><path d="M2 5Q7 0 12 5Q7 10 2 5Z" stroke="#c8cde0" stroke-width="1" fill="none"/><circle cx="7" cy="5" r="2" fill="#c8cde0"/></svg>
<div class="a" style="left:1149px;top:527px;width:14px;height:24px;background:#4a4a4a;border:1px solid #595959;border-radius:2px"></div>
<div class="a" style="left:1165px;top:527px;width:11px;height:24px;background:#4a4a4a;border:1px solid #595959;border-radius:2px"></div>
<svg class="a" style="left:1165px;top:534px;" width="11" height="10" viewBox="0 0 11 10" fill="none"><path d="M3.5 1.5L8.5 5L3.5 8.5Z" fill="#c0c0c0"/></svg>
<div class="a" style="left:1149px;top:556px;width:14px;height:24px;background:#4a4a4a;border:1px solid #595959;border-radius:2px"></div>
<div class="a" style="left:1165px;top:556px;width:11px;height:24px;background:#4a4a4a;border:1px solid #595959;border-radius:2px"></div>
<svg class="a" style="left:1165px;top:563px;" width="11" height="10" viewBox="0 0 11 10" fill="none"><path d="M3.5 1.5L8.5 5L3.5 8.5Z" fill="#c0c0c0"/></svg>
<div class="a" style="left:1149px;top:586px;width:14px;height:63px;background:#5e6a85;border:1px solid #5e6a85;border-radius:2px"></div>
<div class="a" style="left:1165px;top:586px;width:11px;height:63px;background:#4a4a4a;border:1px solid #595959;border-radius:2px"></div>
<svg class="a" style="left:1165px;top:612px;" width="11" height="10" viewBox="0 0 11 10" fill="none"><path d="M3.5 1.5L8.5 5L3.5 8.5Z" fill="#c0c0c0"/></svg>
<svg class="a" style="left:1149px;top:612px;" width="14" height="10" viewBox="0 0 14 10" fill="none"><path d="M2 5Q7 0 12 5Q7 10 2 5Z" stroke="#c8cde0" stroke-width="1" fill="none"/><circle cx="7" cy="5" r="2" fill="#c8cde0"/></svg>
<div class="a" style="left:1157px;top:435px;width:243px;height:1px;background:#5a5a5a;"></div>
<div class="a" style="left:1157px;top:495px;width:243px;height:1px;background:#5a5a5a;"></div>
<div class="a" style="left:1157px;top:524px;width:243px;height:1px;background:#5a5a5a;"></div>
<div class="a" style="left:1157px;top:582px;width:243px;height:1px;background:#5a5a5a;"></div>
<svg class="a" style="left:1180px;top:385px;" width="14" height="270" viewBox="0 0 14 270" fill="none"><g stroke="#1e1e1e" stroke-width="1.2" fill="none"><path d="M4.5 7V36H12"/><path d="M4.5 62V96H12"/><path d="M4.5 212V256H12"/></g><rect x="3" y="5.5" width="3" height="3" fill="#1e1e1e"/><rect x="3" y="60.5" width="3" height="3" fill="#1e1e1e"/><rect x="3" y="210.5" width="3" height="3" fill="#1e1e1e"/></svg>
<div class="t" style="left:1190.54px;top:385.00px;font-size:12px;color:#f0f0f0;transform:scaleX(1.0636);transform-origin:0 0;--nw:24.00;--sx:1.0636;">図形</div>
<div class="a" style="left:1308px;top:380px;width:92px;height:24px;background:#4a4a4a;border:1px solid #5e5e5e;border-radius:3px"></div>
<div class="a" style="left:1309px;top:381px;width:26px;height:22px;background:#7585ad;border-radius:2px 0 0 2px"></div>
<svg class="a" style="left:1308px;top:380px;" width="92" height="24" viewBox="0 0 92 24" fill="none"><rect x="8.5" y="5.5" width="14" height="13" stroke="#d8dcea" stroke-width="1.1" fill="none"/><circle cx="39.5" cy="12" r="8.5" stroke="#c0c0c0" stroke-width="1.1" fill="none"/><path d="M65 4L72.5 8V16L65 20L57.5 16V8Z" stroke="#c0c0c0" stroke-width="1.1" fill="none"/><path d="M80 10L84 14L88 10" stroke="#c0c0c0" stroke-width="1.1" fill="none"/></svg>
<div class="t" style="left:1191.04px;top:409.00px;font-size:12px;color:#7a7a7a;transform:scaleX(0.9639);transform-origin:0 0;--nw:84.00;--sx:0.9639;">多角形の頂点数</div>
<div class="a" style="left:1213px;top:423px;width:114px;height:9px;background:#3a3a3a;border:1px solid #5e5e5e"></div>
<div class="a" style="left:1192px;top:438px;width:14px;height:14px;background:#5a5a5a;border:1px solid #6a6a6a;border-radius:2px"></div>
<svg class="a" style="left:1192px;top:438px;" width="14" height="14" viewBox="0 0 14 14" fill="none"><path d="M3 7.5L6 10.5L11.5 3.5" stroke="#f4f4f4" stroke-width="1.6" fill="none"/></svg>
<div class="t" style="left:1209.80px;top:439.70px;font-size:12px;color:#f0f0f0;transform:scaleX(0.9087);transform-origin:0 0;--nw:48.00;--sx:0.9087;">角の丸さ</div>
<div class="a" style="left:1213px;top:454px;width:114px;height:8px;background:#3a3a3a;border:1px solid #5e5e5e"></div>
<div class="a" style="left:1214px;top:455px;width:44px;height:6px;background:#5c5c5c;"></div>
<div class="t" style="left:1356.00px;top:444.00px;font-size:12px;color:#e0e0e0;--nw:13.36;--sx:1.0000;">30</div>
<svg class="a" style="left:1371px;top:440px;" width="14" height="20" viewBox="0 0 14 20" fill="none"><path d="M3 7L7 3L11 7M3 13L7 17L11 13" stroke="#ccc" stroke-width="1.1" fill="none"/></svg>
<div class="t" style="left:1191.60px;top:474.00px;font-size:12px;color:#f0f0f0;--nw:48.00;--sx:0.9979;">指定方法</div>
<div class="a" style="left:1248px;top:469px;width:152px;height:24px;background:#4a4a4a;border:1px solid #5e5e5e;border-radius:3px"></div>
<div class="a" style="left:1324px;top:470px;width:75px;height:22px;background:#6e7ea6;border-radius:0 2px 2px 0"></div>
<svg class="a" style="left:1248px;top:469px;" width="100" height="24" viewBox="0 0 100 24" fill="none"><circle cx="11" cy="13" r="6.5" fill="#5a5a5a"/><path d="M5 12A6 6 0 0 1 11 6" stroke="#bbb" stroke-width="1" fill="none"/><path d="M10 4V8M9 12L13 8" stroke="#bbb" fill="none"/><text x="10" y="21" font-size="9" fill="#ccc" font-family="Liberation Sans">%</text><circle cx="88" cy="13" r="6.5" fill="#8090b8"/><path d="M82 12A6 6 0 0 1 88 6" stroke="#c8d0e0" stroke-width="1" fill="none"/><text x="86" y="21" font-size="8" fill="#c8d0e0" font-family="Liberation Sans">Px</text></svg>
<div class="t" style="left:1266.91px;top:474.00px;font-size:12px;color:#e8e8e8;transform:scaleX(1.0870);transform-origin:0 0;--nw:48.00;--sx:1.0870;">比率指定</div>
<div class="t" style="left:1343.54px;top:474.00px;font-size:12px;color:#f4f4f4;transform:scaleX(0.9587);transform-origin:0 0;--nw:48.00;--sx:0.9587;">長さ指定</div>
<div class="t" style="left:1191.60px;top:503.70px;font-size:12px;color:#f0f0f0;transform:scaleX(0.8089);transform-origin:0 0;--nw:48.00;--sx:0.8089;">線・塗り</div>
<div class="a" style="left:1320px;top:498px;width:80px;height:24px;background:#4a4a4a;border:1px solid #5e5e5e;border-radius:3px"></div>
<svg class="a" style="left:1322px;top:500px;" width="20" height="20" viewBox="0 0 20 20" fill="none"><path d="M3 19V12A9 9 0 0 1 12 3H19V19Z" fill="#a8a8a8"/></svg>
<div class="a" style="left:1338px;top:503px;width:55px;height:18px;background:#ffffff;"></div>
<div class="a" style="left:1340px;top:521px;width:55px;height:2px;background:rgba(0,0,0,0.5);"></div>
<div class="t" style="left:1343.09px;top:506.00px;font-size:12px;color:#3a3a3a;transform:scaleX(0.9130);transform-origin:0 0;--nw:48.00;--sx:0.9130;">長さ指定</div>
<div class="t" style="left:1192.00px;top:534.00px;font-size:12px;color:#7c7c7c;transform:scaleX(0.9167);transform-origin:0 0;--nw:36.00;--sx:0.9167;">線の色</div>
<div class="t" style="left:1192.00px;top:563.00px;font-size:12px;color:#7c7c7c;transform:scaleX(0.8542);transform-origin:0 0;--nw:48.00;--sx:0.8542;">塗りの色</div>
<div class="a" style="left:1247px;top:528px;width:153px;height:23px;background:#434343;border-radius:3px"></div>
<svg class="a" style="left:1247px;top:528px;" width="153" height="23" viewBox="0 0 153 23" fill="none"><rect x="15.5" y="3.5" width="14" height="14" fill="#7a6a4a" stroke="#8a7a5a"/><rect x="25.5" y="13.5" width="8" height="8" fill="#2a2a2a" stroke="#5a5a5a"/><rect x="61.5" y="3.5" width="8" height="8" fill="#7a6a4a" stroke="#8a7a5a"/><rect x="65.5" y="8.5" width="13" height="13" fill="#2a2a2a" stroke="#5a5a5a"/><path d="M141 8L145.5 12L150 8" stroke="#6a6a6a" fill="none"/></svg>
<div class="a" style="left:1247px;top:557px;width:153px;height:23px;background:#434343;border-radius:3px"></div>
<svg class="a" style="left:1247px;top:557px;" width="153" height="23" viewBox="0 0 153 23" fill="none"><rect x="15.5" y="3.5" width="14" height="14" fill="#7a6a4a" stroke="#8a7a5a"/><rect x="25.5" y="13.5" width="8" height="8" fill="#2a2a2a" stroke="#5a5a5a"/><rect x="61.5" y="3.5" width="8" height="8" fill="#7a6a4a" stroke="#8a7a5a"/><rect x="65.5" y="8.5" width="13" height="13" fill="#2a2a2a" stroke="#5a5a5a"/><path d="M141 8L145.5 12L150 8" stroke="#6a6a6a" fill="none"/></svg>
<svg class="a" style="left:1247px;top:528px;" width="153" height="23" viewBox="0 0 153 23" fill="none"><rect x="108.5" y="4.5" width="13" height="13" fill="#2c2c2c" stroke="#1a1a1a"/></svg>
<svg class="a" style="left:1247px;top:557px;" width="153" height="23" viewBox="0 0 153 23" fill="none"><rect x="108.5" y="4.5" width="13" height="13" fill="#888" stroke="#a8a8a8"/></svg>
<div class="a" style="left:1192px;top:590px;width:14px;height:14px;background:#5a5a5a;border:1px solid #6a6a6a;border-radius:2px"></div>
<div class="t" style="left:1209.80px;top:591.00px;font-size:12px;color:#f0f0f0;--nw:48.00;--sx:0.9979;">縦横指定</div>
<div class="a" style="left:1342px;top:586px;width:58px;height:23px;background:#434343;border-radius:3px"></div>
<svg class="a" style="left:1342px;top:586px;" width="58" height="23" viewBox="0 0 58 23" fill="none"><circle cx="11" cy="12" r="7" fill="#4e4e4e"/><path d="M5 11A6 6 0 0 1 11 5" stroke="#6a6a6a" fill="none"/><text x="10" y="20" font-size="9" fill="#6a6a6a" font-family="Liberation Sans">%</text><circle cx="33" cy="12" r="7" fill="#4e4e4e"/><path d="M27 11A6 6 0 0 1 33 5" stroke="#6a6a6a" fill="none"/><text x="31" y="20" font-size="8" fill="#6a6a6a" font-family="Liberation Sans">Px</text><path d="M46 9L50.5 13.5L55 9" stroke="#c8c8c8" stroke-width="1.2" fill="none"/></svg>
<div class="t" style="left:1192.00px;top:616.00px;font-size:12px;color:#7a7a7a;transform:scaleX(1.2727);transform-origin:0 0;--nw:12.00;--sx:1.2727;">横</div>
<div class="t" style="left:1192.00px;top:636.00px;font-size:12px;color:#7a7a7a;transform:scaleX(1.2727);transform-origin:0 0;--nw:12.00;--sx:1.2727;">縦</div>
<div class="a" style="left:1213px;top:617px;width:114px;height:9px;background:#3a3a3a;border:1px solid #5e5e5e"></div>
<div class="a" style="left:1213px;top:637px;width:114px;height:9px;background:#3a3a3a;border:1px solid #5e5e5e"></div>
<div class="a" style="left:1146px;top:652px;width:258px;height:107px;background:#4f4f4f;"></div>
<div class="a" style="left:1151px;top:656px;width:28px;height:28px;background:#bdbdbd;border-radius:6px"></div>
<svg class="a" style="left:1151px;top:656px;" width="28" height="28" viewBox="0 0 28 28" fill="none"><circle cx="14" cy="7" r="2.2" fill="#505050"/><rect x="12" y="11" width="4" height="13" fill="#505050"/></svg>
<div class="t" style="left:1180.15px;top:663.40px;font-size:12px;color:#ececec;transform:scaleX(0.8515);transform-origin:0 0;--nw:102.67;--sx:0.8515;">[角の丸さ]について</div>
<div class="t" style="left:1154.69px;top:686.00px;font-size:12px;color:#ececec;transform:scaleX(0.9076);transform-origin:0 0;--nw:180.00;--sx:0.9076;">多角形の角の丸さを設定します。</div>
<div class="a" style="left:1059px;top:760px;width:169px;height:20px;background:#555555;border:1px solid #6a6a6a;border-radius:3px"></div>
<div class="a" style="left:1232px;top:760px;width:168px;height:20px;background:#555555;border:1px solid #6a6a6a;border-radius:3px"></div>
<svg class="a" style="left:1070px;top:762px;" width="18" height="17" viewBox="0 0 18 17" fill="none"><circle cx="8.5" cy="8.5" r="6.5" stroke="#a8a8a8" stroke-width="1" fill="none" stroke-dasharray="30 4"/><circle cx="8.5" cy="9" r="2" fill="#a8a8a8"/><path d="M8.5 3V9" stroke="#a8a8a8"/></svg>
<div class="t" style="left:1095.00px;top:764.00px;font-size:12px;color:#ececec;transform:scaleX(0.9389);transform-origin:0 0;--nw:132.00;--sx:0.9389;">全設定を初期設定に戻す</div>
<div class="t" style="left:1252.80px;top:764.00px;font-size:12px;color:#ececec;transform:scaleX(0.9595);transform-origin:0 0;--nw:132.00;--sx:0.9595;">全設定を初期設定に登録</div>
<div class="t" style="left:555.50px;top:415.00px;font-size:28px;color:#b52525;--nw:28.00;--sx:1.0000;">指</div>
<div class="t" style="left:584.50px;top:415.00px;font-size:28px;color:#b52525;--nw:28.00;--sx:1.0000;">定</div>
<div class="t" style="left:614.40px;top:415.00px;font-size:28px;color:#b52525;--nw:28.00;--sx:1.0000;">方</div>
<div class="t" style="left:644.30px;top:415.00px;font-size:28px;color:#b52525;--nw:28.00;--sx:1.0000;">法</div>
<div class="t" style="left:689.00px;top:415.00px;font-size:28px;color:#b52525;--nw:29.00;--sx:1.0000;">を</div>
<div class="t" style="left:553.00px;top:452.00px;font-size:28px;color:#b52525;--nw:28.00;--sx:1.0000;">比</div>
<div class="t" style="left:584.80px;top:452.00px;font-size:28px;color:#b52525;--nw:28.00;--sx:1.0000;">率</div>
<div class="t" style="left:615.20px;top:452.00px;font-size:28px;color:#b52525;--nw:28.00;--sx:1.0000;">指</div>
<div class="t" style="left:643.90px;top:452.00px;font-size:28px;color:#b52525;--nw:28.00;--sx:1.0000;">定</div>
<div class="t" style="left:690.70px;top:452.00px;font-size:28px;color:#b52525;--nw:29.00;--sx:1.0000;">か</div>
<div class="t" style="left:718.40px;top:452.00px;font-size:28px;color:#b52525;--nw:29.00;--sx:1.0000;">ら</div>
<div class="t" style="left:764.00px;top:452.00px;font-size:28px;color:#b52525;--nw:28.00;--sx:1.0000;">長</div>
<div class="t" style="left:794.00px;top:452.00px;font-size:28px;color:#b52525;--nw:29.00;--sx:1.0000;">さ</div>
<div class="t" style="left:825.40px;top:452.00px;font-size:28px;color:#b52525;--nw:28.00;--sx:1.0000;">指</div>
<div class="t" style="left:853.30px;top:452.00px;font-size:28px;color:#b52525;--nw:28.00;--sx:1.0000;">定</div>
<div class="t" style="left:899.00px;top:452.00px;font-size:28px;color:#b52525;--nw:29.00;--sx:1.0000;">に</div>
<div class="t" style="left:539.00px;top:487.00px;font-size:28px;color:#b52525;--nw:28.00;--sx:1.0000;">変</div>
<div class="t" style="left:569.20px;top:487.00px;font-size:28px;color:#b52525;--nw:29.00;--sx:1.0000;">え</div>
<div class="t" style="left:599.60px;top:487.00px;font-size:28px;color:#b52525;--nw:29.00;--sx:1.0000;">る</div>
<div class="t" style="left:629.00px;top:487.00px;font-size:28px;color:#b52525;--nw:29.00;--sx:1.0000;">だ</div>
<div class="t" style="left:660.00px;top:487.00px;font-size:28px;color:#b52525;--nw:29.00;--sx:1.0000;">け</div>
<div class="t" style="left:688.30px;top:487.00px;font-size:28px;color:#b52525;--nw:28.00;--sx:1.0000;">！</div>
<svg class="a" style="left:0;top:0" width="1000" height="600" viewBox="0 0 1000 600" fill="none"><path d="M552.5 415.4H542.5V440" stroke="#b52525" stroke-width="1.9"/><path d="M552.5 451.9H542.5V476.5" stroke="#b52525" stroke-width="1.9"/><path d="M762.7 452.09999999999997H753.2V476" stroke="#b52525" stroke-width="1.9"/><path d="M683.3 417.4V441.3H674" stroke="#b52525" stroke-width="1.9"/><path d="M683.2 454.2V477.8H674" stroke="#b52525" stroke-width="1.9"/><path d="M894.1 453.5V477.90000000000003H884" stroke="#b52525" stroke-width="1.9"/></svg>
<svg class="a" style="left:0;top:0" width="1439" height="898" viewBox="0 0 1439 898" fill="none"><path d="M953.3 428.6 C957.2 427.1 961.7 423.2 977 419.4 C992.3 415.6 1023.7 408.5 1045 405.6 C1066.3 402.7 1085.0 402.5 1105 402.1 C1125.0 401.7 1149.2 402.5 1165 403.2 C1180.8 403.9 1185.8 404.7 1200 406.5 C1214.2 408.3 1233.3 410.2 1250 414 C1266.7 417.8 1286.0 421.8 1300 429 C1314.0 436.2 1328.3 452.3 1334 457" stroke="#b52525" stroke-width="9.5" stroke-linecap="round"/><path d="M1314.5 427L1333 457M1299 452L1336 459" stroke="#b52525" stroke-width="10" stroke-linecap="round"/><ellipse cx="1362" cy="477.5" rx="50.5" ry="23.5" transform="rotate(-9 1362 477.5)" stroke="#b52525" stroke-width="9"/></svg>
<svg class="a" style="left:0;top:0" width="760" height="75" viewBox="0 0 760 75" fill="none"><rect x="248.5" y="50.5" width="17" height="17" rx="2" stroke="#c4c4c4" stroke-width="1.2"/><path d="M253 62Q250 56 256 54Q262 52 262 57Q261 61 256 60Q253 58 257 56Q259 56 259 57M255 64Q262 65 263 59" stroke="#c4c4c4" stroke-width="1.2"/><path d="M273.5 49V70M367.5 49V70M423.5 49V70M527.5 49V70M607.5 49V70M687.5 49V70" stroke="#6a6a6a" stroke-width="1"/><path d="M288 66.5Q283.5 66.5 283.5 63V51.5H295.5V61" stroke="#c4c4c4" stroke-width="1.2"/><path d="M284 64L288 67V63Z" fill="#c4c4c4"/><circle cx="295" cy="65.5" r="4.5" fill="#8a8a8a" stroke="#c4c4c4" stroke-width="1.1"/><path d="M292.5 65.5H297.5M295 63V68" stroke="#e0e0e0" stroke-width="1.3"/><path d="M305.5 66.5V52.5H311L313 55H315" stroke="#c4c4c4" stroke-width="1.3"/><path d="M306 67L309 59H323L320 67Z" fill="#c4c4c4"/><path d="M314 57Q315 53 320 53M318 51L321 53L318 55" stroke="#c4c4c4" stroke-width="1.2"/><path d="M329 63L332 54H335M341 54H344L347 63V67H329Z" stroke="#7c7c7c" stroke-width="1.2"/><rect x="329" y="63" width="18" height="4" fill="#606060"/><path d="M338 50V59M335 56L338 59L341 56" stroke="#7c7c7c" stroke-width="1.2"/><path d="M352.5 57L356 60.5L359.5 57" stroke="#c4c4c4" stroke-width="1.2"/><path d="M381 55H386Q390 55 390 60Q390 65 386 65H377" stroke="#7c7c7c" stroke-width="1.3"/><path d="M375 55L381 51V59Z" fill="#7c7c7c"/><path d="M408 55H403Q399 55 399 60Q399 65 403 65H413" stroke="#7c7c7c" stroke-width="1.3"/><path d="M414 55L408 51V59Z" fill="#7c7c7c"/><path d="M443.25 59.00L447.25 59.00" stroke="#c4c4c4" stroke-width="2.2" stroke-linecap="round"/><path d="M442.65 61.25L446.11 63.25" stroke="#c4c4c4" stroke-width="2.2" stroke-linecap="round"/><path d="M441.00 62.90L443.00 66.36" stroke="#c4c4c4" stroke-width="2.2" stroke-linecap="round"/><path d="M438.75 63.50L438.75 67.50" stroke="#c4c4c4" stroke-width="2.2" stroke-linecap="round"/><path d="M436.50 62.90L434.50 66.36" stroke="#c4c4c4" stroke-width="2.2" stroke-linecap="round"/><path d="M434.85 61.25L431.39 63.25" stroke="#c4c4c4" stroke-width="2.2" stroke-linecap="round"/><path d="M434.25 59.00L430.25 59.00" stroke="#c4c4c4" stroke-width="2.2" stroke-linecap="round"/><path d="M434.85 56.75L431.39 54.75" stroke="#c4c4c4" stroke-width="2.2" stroke-linecap="round"/><path d="M436.50 55.10L434.50 51.64" stroke="#c4c4c4" stroke-width="2.2" stroke-linecap="round"/><path d="M438.75 54.50L438.75 50.50" stroke="#c4c4c4" stroke-width="2.2" stroke-linecap="round"/><path d="M441.00 55.10L443.00 51.64" stroke="#c4c4c4" stroke-width="2.2" stroke-linecap="round"/><path d="M442.65 56.75L446.11 54.75" stroke="#c4c4c4" stroke-width="2.2" stroke-linecap="round"/><rect x="455.5" y="51.5" width="11" height="11" stroke="#7c7c7c" stroke-dasharray="2 1.5"/><path d="M469 60L471 59M468 64L470 65M464 66L464 68M460 65L459 67" stroke="#7c7c7c" stroke-width="1"/><path d="M487 50L496 59L487 68L478 59Z" fill="#c4c4c4"/><path d="M481 56L487 50L493 56Z" fill="#5a5a5a"/><path d="M478 59Q477 64 480 64" stroke="#c4c4c4" stroke-width="2"/><rect x="504.5" y="54.5" width="13" height="12" stroke="#c4c4c4" stroke-width="1.2"/><path d="M511 54V50.5" stroke="#c4c4c4"/><circle cx="511" cy="50.5" r="1.3" fill="#c4c4c4"/><rect x="503.3" y="53.3" width="2.4" height="2.4" fill="#c4c4c4"/><rect x="509.8" y="53.3" width="2.4" height="2.4" fill="#c4c4c4"/><rect x="516.3" y="53.3" width="2.4" height="2.4" fill="#c4c4c4"/><rect x="503.3" y="59.3" width="2.4" height="2.4" fill="#c4c4c4"/><rect x="516.3" y="59.3" width="2.4" height="2.4" fill="#c4c4c4"/><rect x="503.3" y="65.3" width="2.4" height="2.4" fill="#c4c4c4"/><rect x="509.8" y="65.3" width="2.4" height="2.4" fill="#c4c4c4"/><rect x="516.3" y="65.3" width="2.4" height="2.4" fill="#c4c4c4"/><rect x="535.5" y="51.5" width="15" height="15" rx="1" stroke="#7c7c7c" stroke-dasharray="2 1.5"/><path d="M535 51L552 68" stroke="#7c7c7c" stroke-width="1.1"/><rect x="559.5" y="51.5" width="15" height="15" rx="1" stroke="#7c7c7c" stroke-dasharray="2 1.5"/><path d="M575 54V67H562Z" fill="#7c7c7c"/><path d="M559 67L575 51" stroke="#7c7c7c"/><rect x="583.5" y="51.5" width="15" height="15" rx="2" stroke="#7c7c7c"/><rect x="586.5" y="54.5" width="9" height="9" stroke="#7c7c7c" stroke-dasharray="2 1.2"/><rect x="611" y="47.2" width="48" height="23.6" rx="2" fill="#66718f"/><path d="M615.5 52V66.5H630" stroke="#d4d8e4" stroke-width="1.1"/><path d="M615.5 52L630 66.5" stroke="#a8b0c4" stroke-width="0.8"/><path d="M623.5 59L631 51" stroke="#d4d8e4" stroke-width="2.6" stroke-linecap="round"/><path d="M638.2 59.4H655.6A8.7 8.7 0 0 1 638.2 59.4Z" stroke="#d4d8e4" stroke-width="1.1"/><path d="M648 58.6L655.4 51" stroke="#d4d8e4" stroke-width="2.6" stroke-linecap="round"/><path d="M662 59.4H680M662 65.7H680M665.4 55V69M674 55V69" stroke="#7e7e7e" stroke-width="0.8"/><path d="M665.8 59.4V65.8H680" stroke="#c4c4c4" stroke-width="1.2"/><path d="M671 59L679 51" stroke="#c4c4c4" stroke-width="2.6" stroke-linecap="round"/><circle cx="703" cy="59" r="7.8" stroke="#c4c4c4" stroke-width="1.2"/><path d="M697.5 64.5L696 68L700 66" stroke="#c4c4c4" stroke-width="1.2"/><path d="M700.3 56.5Q700.3 53.5 703 53.5Q705.8 53.5 705.8 56Q705.8 57.8 703.2 59V60.8" stroke="#c4c4c4" stroke-width="1.7"/><circle cx="703.2" cy="63.3" r="1" fill="#c4c4c4"/><path d="M708 53L711.5 49.8M709 49.8H711.8V52.6" stroke="#c4c4c4" stroke-width="1.1"/></svg>
<div class="a" style="left:19px;top:70px;width:18px;height:14px;background:#4b4b4b;"></div>
<svg class="a" style="left:0;top:70px" width="37" height="630" viewBox="0 70 37 630" fill="none"><path d="M26 83L27.5 79L35 71.5L37 73.5L29.5 81Z" fill="#c0c0c0"/><circle cx="16" cy="99" r="6" stroke="#c0c0c0" stroke-width="1.4"/><path d="M20.5 103.5L25 108" stroke="#c0c0c0" stroke-width="1.8"/><circle cx="17" cy="126.5" r="6.5" stroke="#c0c0c0" stroke-width="1.3" stroke-dasharray="1.6 1.8"/><path d="M20 125H26L23 129Z" fill="#c0c0c0"/><path d="M10.5 146.5L15 144L20 146.5V153L15 155.5L10.5 153Z" stroke="#c0c0c0" stroke-width="1.1"/><path d="M10.5 146.5L15 149L20 146.5M15 149V155.5" stroke="#c0c0c0" stroke-width="0.9"/><path d="M18.5 150.5V160L20.5 157.5L23 161.5L24.5 160.5L22.5 156.5H26Z" fill="#c0c0c0"/><path d="M18 168V186M9 177H27" stroke="#c0c0c0" stroke-width="1.3"/><path d="M18 167L15 171H21ZM18 187L15 183H21ZM8 177L12 174V180ZM28 177L24 174V180Z" fill="#c0c0c0"/><rect x="10.5" y="194.5" width="15" height="15" stroke="#c0c0c0" stroke-width="1.2" stroke-dasharray="2 1.6"/><path d="M9 234L18 225" stroke="#c0c0c0" stroke-width="1.4"/><path d="M21 216L22 221L27 222L22 223L21 228L20 223L15 222L20 221Z" fill="#c0c0c0"/><path d="M10 260L11 256L19 248L22 251L14 259Z" stroke="#c0c0c0" stroke-width="1.2"/><path d="M19 248L22 245L25 248L22 251Z" fill="#c0c0c0"/><path d="M21 244L26 249" stroke="#c0c0c0" stroke-width="1.5"/><path d="M3 267.5H35" stroke="#5c5c5c"/><path d="M10 287L12 279L20 272L26 278L19 285Z" stroke="#c0c0c0" stroke-width="1.2"/><path d="M20 272L23 269L29 275L26 278Z" fill="#c0c0c0"/><path d="M10 287L16 281" stroke="#c0c0c0" stroke-width="0.9"/><path d="M10 313L12 305L20 298L26 304L19 311Z" stroke="#c0c0c0" stroke-width="1.2"/><path d="M20 298L23 295L29 301L26 304ZM14 305L18 301L21 306L16 309Z" fill="#c0c0c0"/><path d="M9 338Q14 338 15 333Q16 327 20 324L25 329Q21 333 16 336" stroke="#c0c0c0" stroke-width="1.2"/><path d="M20 324L23 321Q26 321 27 324L25 329Z" fill="#c0c0c0"/><path d="M9 355L18 346L26 354L21 359H13Z" stroke="#c0c0c0" stroke-width="1.2"/><path d="M18 346L20 344L28 352L26 354Z" fill="#c0c0c0"/><path d="M13 363H26" stroke="#c0c0c0"/><path d="M10 372L26 387M26 372L10 387" stroke="#c0c0c0" stroke-width="1.2"/><path d="M18 372L25 379.5L18 387L11 379.5Z" fill="#c0c0c0"/><rect x="13.5" y="404.5" width="13" height="7" rx="1" stroke="#c0c0c0" stroke-width="1.2"/><path d="M14 404Q14 400 20 400Q26 400 26 404Z" fill="#c0c0c0"/><rect x="18" y="396" width="3" height="4" fill="#c0c0c0"/><g fill="#8a8a8a"><rect x="9" y="395" width="1.5" height="1.5"/><rect x="12" y="396" width="1.5" height="1.5"/><rect x="15" y="397" width="1.5" height="1.5"/><rect x="9" y="398" width="1.5" height="1.5"/><rect x="12" y="399" width="1.5" height="1.5"/><rect x="9" y="401" width="1.5" height="1.5"/></g><path d="M13 420L9 428Q8 435 14 435Q18 435 18 430Q18 435 23 435Q28 435 27 428L23 420L18 427Z" fill="#8c8c8c"/><path d="M3 443.5H35" stroke="#5c5c5c"/><path d="M8 462Q6 458 10 457Q11 452 14 454L16 450L18 453L21 450L22 454Q26 452 26 457Q30 458 28 462Q24 461 22 463H14Q12 461 8 462Z" fill="#1c1c1c"/><defs><linearGradient id="gd" x1="0" y1="0" x2="1" y2="1"><stop offset="0" stop-color="#444"/><stop offset="1" stop-color="#ddd"/></linearGradient></defs><rect x="10.5" y="475.5" width="15" height="15" rx="2" fill="url(#gd)" stroke="#c0c0c0" stroke-width="1.1"/><rect x="6.5" y="496.5" width="23" height="23" fill="#66718f" stroke="#2d3140"/><rect x="11.5" y="501.5" width="13" height="13" stroke="#d8dce8" stroke-width="1.2"/><rect x="10.5" y="525.5" width="15" height="15" rx="1" stroke="#c0c0c0" stroke-width="1.2"/><path d="M10.5 530.5H25.5M10.5 535.5H20M20 530.5L18 540.5" stroke="#c0c0c0" stroke-width="1.1"/><path d="M10 549.5H26L10 565.5Z" stroke="#c0c0c0" stroke-width="2" stroke-linejoin="round"/><text x="18" y="593" text-anchor="middle" font-size="23" font-family="Liberation Sans" fill="#c0c0c0">A</text><path d="M18 598L19.6 603L24 600.5L22 605.5L27 607.5L22 609.5L24 614.5L19.6 612L18 617L16.4 612L12 614.5L14 609.5L9 607.5L14 605.5L12 600.5L16.4 603Z" fill="#c0c0c0"/><path d="M9 640H27" stroke="#c0c0c0" stroke-width="1.1"/><path d="M9 641L14 635L17 638Z" fill="#c0c0c0"/><path d="M15 636L24 624L27 627L18 639Z" fill="#c0c0c0"/></svg>
<div class="a" style="left:14px;top:659px;width:22px;height:22px;background:#000;border:3px solid #7a95d0;border-radius:5px"></div>
<div class="a" style="left:1px;top:648px;width:22px;height:22px;background:#474747;border:2px solid #5e5e5e;border-radius:5px"></div>
<div class="a" style="left:4px;top:651px;width:16px;height:16px;background:#e0b05e;border-radius:2px"></div>
<div class="a" style="left:1px;top:682px;width:34px;height:12px;background:transparent;border:1px solid #5e5e5e;border-radius:6px"></div>
<svg class="a" style="left:5px;top:685px;" width="28" height="6" viewBox="0 0 28 6" fill="none"><path d="M1 0.5H6V3H1Z M11 0.5H16V3H11Z M21 0.5H26V3H21Z M6 3H11V5.5H6Z M16 3H21V5.5H16Z" fill="#f4f4f4"/><path d="M6 0.5H11V3H6Z M16 0.5H21V3H16Z M1 3H6V5.5H1Z M11 3H16V5.5H11Z M21 3H26V5.5H21Z" fill="#7a7a7a"/></svg>
<script>
(function(){try{var els=document.querySelectorAll('.t');for(var i=0;i<els.length;i++){var e=els[i];var cs=e.style;var nw=parseFloat(cs.getPropertyValue('--nw'));var sx=parseFloat(cs.getPropertyValue('--sx'));if(!nw||!sx)continue;var w=e.getBoundingClientRect().width/ (sx||1);if(Math.abs(w-nw)>Math.max(2,nw*0.08)&&w>0){var ns=sx*nw/w;e.style.transform='scaleX('+ns.toFixed(4)+')';e.style.transformOrigin='0 0';}}}catch(err){}})();
</script>
</body></html>
